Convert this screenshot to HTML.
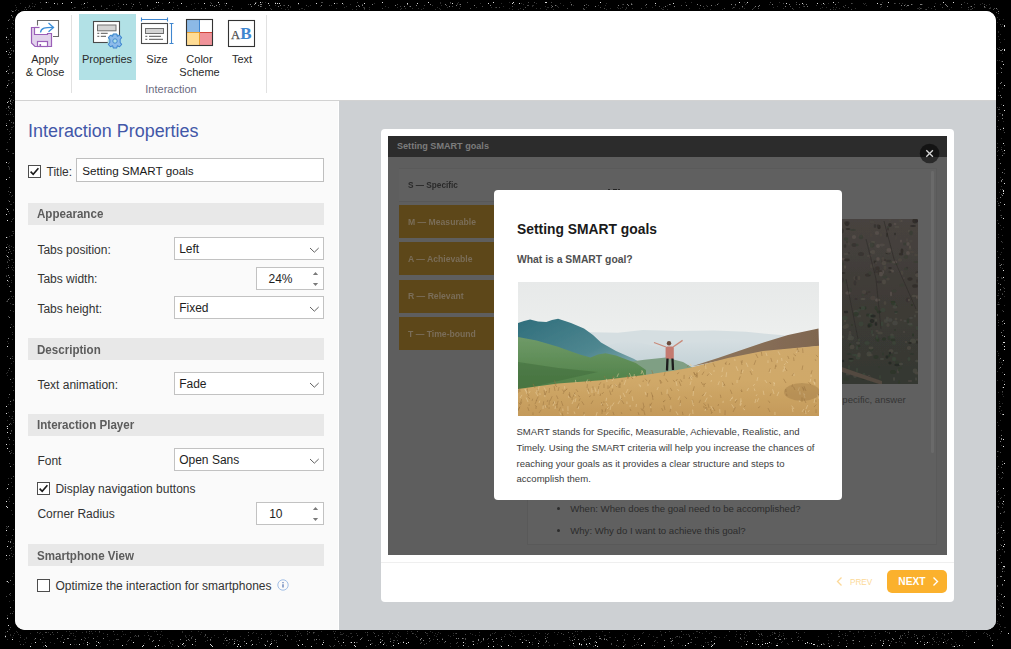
<!DOCTYPE html>
<html><head><meta charset="utf-8">
<style>
*{margin:0;padding:0;box-sizing:border-box}
html,body{width:1011px;height:649px;overflow:hidden;background:#000;font-family:"Liberation Sans",sans-serif}
.abs{position:absolute}
.t{position:absolute;white-space:nowrap}
#win{position:absolute;left:15px;top:11px;width:981px;height:619px;border-radius:10px;background:#fff;overflow:hidden}
#ribbon{position:absolute;left:0;top:0;width:981px;height:90px;background:#fff;border-bottom:1px solid #d2d2d2}
.rl{position:absolute;font-size:11px;color:#2a2a2a;text-align:center;line-height:13px;white-space:nowrap}
.sep{position:absolute;width:1px;background:#e1e1e1}
#left{position:absolute;left:0;top:90px;width:324px;height:529px;background:#fafafa;border-right:1px solid #fff}
#right{position:absolute;left:324px;top:90px;width:657px;height:529px;background:#cdd0d3}
.bar{position:absolute;left:13px;width:296px;height:22px;background:#e8e8e8}
.box{position:absolute;background:#fff;border:1px solid #c4c4c4}
.chk{position:absolute;width:13px;height:13px;border:1px solid #555;background:#fff}
</style></head><body>
<svg class="abs" style="left:0;top:0" width="1011" height="649" viewBox="0 0 1011 649"><path fill="#4a4a4a" d="M40 2h1v1h-1zM87 2h1v1h-1zM139 2h1v1h-1zM255 2h1v1h-1zM262 2h1v1h-1zM321 2h1v1h-1zM322 2h1v1h-1zM357 2h1v1h-1zM450 2h1v1h-1zM467 2h1v1h-1zM528 2h1v1h-1zM534 2h1v1h-1zM551 2h1v1h-1zM770 2h1v1h-1zM796 2h1v1h-1zM838 2h1v1h-1zM57 3h1v1h-1zM211 3h1v1h-1zM631 3h1v1h-1zM783 3h1v1h-1zM851 3h1v1h-1zM894 3h1v1h-1zM899 3h1v1h-1zM967 3h1v1h-1zM57 4h1v1h-1zM140 4h1v1h-1zM248 4h1v1h-1zM362 4h1v1h-1zM397 4h1v1h-1zM586 4h1v1h-1zM623 4h1v1h-1zM670 4h1v1h-1zM796 4h1v1h-1zM803 4h1v1h-1zM824 4h1v1h-1zM974 4h1v1h-1zM984 4h1v1h-1zM177 5h1v1h-1zM225 5h1v1h-1zM284 5h1v1h-1zM306 5h1v1h-1zM329 5h1v1h-1zM424 5h1v1h-1zM446 5h1v1h-1zM527 5h1v1h-1zM528 5h1v1h-1zM551 5h1v1h-1zM588 5h1v1h-1zM645 5h1v1h-1zM655 5h1v1h-1zM681 5h1v1h-1zM845 5h1v1h-1zM29 6h1v1h-1zM34 6h1v1h-1zM101 6h1v1h-1zM132 6h1v1h-1zM186 6h1v1h-1zM232 6h1v1h-1zM261 6h1v1h-1zM400 6h1v1h-1zM452 6h1v1h-1zM460 6h1v1h-1zM482 6h1v1h-1zM512 6h1v1h-1zM659 6h1v1h-1zM703 6h1v1h-1zM707 6h1v1h-1zM790 6h1v1h-1zM804 6h1v1h-1zM843 6h1v1h-1zM25 7h1v1h-1zM74 7h1v1h-1zM496 7h1v1h-1zM499 7h1v1h-1zM525 7h1v1h-1zM551 7h1v1h-1zM600 7h1v1h-1zM733 7h1v1h-1zM848 7h1v1h-1zM942 7h1v1h-1zM968 7h1v1h-1zM984 7h1v1h-1zM72 8h1v1h-1zM106 8h1v1h-1zM153 8h1v1h-1zM201 8h1v1h-1zM205 8h1v1h-1zM265 8h1v1h-1zM364 8h1v1h-1zM382 8h1v1h-1zM470 8h1v1h-1zM567 8h1v1h-1zM583 8h1v1h-1zM604 8h1v1h-1zM641 8h1v1h-1zM724 8h1v1h-1zM758 8h1v1h-1zM792 8h1v1h-1zM920 8h1v1h-1zM972 8h1v1h-1zM989 8h1v1h-1zM994 8h1v1h-1zM26 9h1v1h-1zM95 9h1v1h-1zM150 9h1v1h-1zM163 9h1v1h-1zM172 9h1v1h-1zM231 9h1v1h-1zM271 9h1v1h-1zM523 9h1v1h-1zM584 9h1v1h-1zM752 9h1v1h-1zM830 9h1v1h-1zM851 9h1v1h-1zM926 9h1v1h-1zM993 9h1v1h-1zM15 10h1v1h-1zM13 11h1v1h-1zM996 12h1v1h-1zM998 13h1v1h-1zM12 17h1v1h-1zM9 19h1v1h-1zM12 23h1v1h-1zM1000 24h1v1h-1zM7 28h1v1h-1zM8 39h1v1h-1zM7 42h1v1h-1zM998 49h1v1h-1zM11 50h1v1h-1zM13 50h1v1h-1zM13 51h1v1h-1zM9 57h1v1h-1zM7 70h1v1h-1zM12 72h1v1h-1zM13 72h1v1h-1zM12 73h1v1h-1zM8 80h1v1h-1zM12 82h1v1h-1zM6 87h1v1h-1zM11 95h1v1h-1zM13 100h1v1h-1zM11 104h1v1h-1zM9 108h1v1h-1zM998 109h1v1h-1zM999 109h1v1h-1zM6 114h1v1h-1zM998 120h1v1h-1zM11 122h1v1h-1zM13 122h1v1h-1zM6 123h1v1h-1zM13 123h1v1h-1zM7 129h1v1h-1zM1004 132h1v1h-1zM10 133h1v1h-1zM9 139h1v1h-1zM997 147h1v1h-1zM6 149h1v1h-1zM1001 149h1v1h-1zM8 151h1v1h-1zM13 153h1v1h-1zM1004 153h1v1h-1zM999 159h1v1h-1zM8 163h1v1h-1zM8 166h1v1h-1zM1004 169h1v1h-1zM1004 173h1v1h-1zM9 187h1v1h-1zM1002 189h1v1h-1zM8 191h1v1h-1zM1001 194h1v1h-1zM998 203h1v1h-1zM999 205h1v1h-1zM6 208h1v1h-1zM1001 215h1v1h-1zM1001 217h1v1h-1zM11 221h1v1h-1zM998 223h1v1h-1zM1001 241h1v1h-1zM1003 248h1v1h-1zM11 253h1v1h-1zM6 255h1v1h-1zM8 257h1v1h-1zM998 257h1v1h-1zM1003 259h1v1h-1zM9 260h1v1h-1zM7 262h1v1h-1zM6 276h1v1h-1zM8 281h1v1h-1zM998 283h1v1h-1zM1004 288h1v1h-1zM1004 291h1v1h-1zM1002 294h1v1h-1zM7 301h1v1h-1zM13 304h1v1h-1zM998 304h1v1h-1zM10 310h1v1h-1zM1003 311h1v1h-1zM997 314h1v1h-1zM997 315h1v1h-1zM8 316h1v1h-1zM1003 320h1v1h-1zM998 322h1v1h-1zM1003 330h1v1h-1zM1002 344h1v1h-1zM7 356h1v1h-1zM1002 364h1v1h-1zM999 368h1v1h-1zM13 390h1v1h-1zM1002 391h1v1h-1zM13 400h1v1h-1zM1000 406h1v1h-1zM13 411h1v1h-1zM9 416h1v1h-1zM10 423h1v1h-1zM11 430h1v1h-1zM8 437h1v1h-1zM997 451h1v1h-1zM1000 452h1v1h-1zM10 453h1v1h-1zM1002 461h1v1h-1zM9 463h1v1h-1zM998 466h1v1h-1zM1001 467h1v1h-1zM13 476h1v1h-1zM11 478h1v1h-1zM1001 478h1v1h-1zM997 491h1v1h-1zM12 494h1v1h-1zM1004 495h1v1h-1zM1000 498h1v1h-1zM13 503h1v1h-1zM1003 504h1v1h-1zM998 507h1v1h-1zM1002 507h1v1h-1zM1004 511h1v1h-1zM1001 525h1v1h-1zM6 526h1v1h-1zM1001 527h1v1h-1zM13 529h1v1h-1zM1004 530h1v1h-1zM12 535h1v1h-1zM999 549h1v1h-1zM997 550h1v1h-1zM1004 551h1v1h-1zM12 556h1v1h-1zM999 558h1v1h-1zM6 559h1v1h-1zM1004 567h1v1h-1zM1002 568h1v1h-1zM6 581h1v1h-1zM997 585h1v1h-1zM1002 585h1v1h-1zM997 586h1v1h-1zM10 593h1v1h-1zM9 594h1v1h-1zM6 596h1v1h-1zM997 599h1v1h-1zM1001 606h1v1h-1zM10 613h1v1h-1zM12 613h1v1h-1zM1003 616h1v1h-1zM10 627h1v1h-1zM9 629h1v1h-1zM89 631h1v1h-1zM99 631h1v1h-1zM113 631h1v1h-1zM307 631h1v1h-1zM417 631h1v1h-1zM681 631h1v1h-1zM729 631h1v1h-1zM839 631h1v1h-1zM885 631h1v1h-1zM895 631h1v1h-1zM37 632h1v1h-1zM45 632h1v1h-1zM46 632h1v1h-1zM52 632h1v1h-1zM57 632h1v1h-1zM248 632h1v1h-1zM309 632h1v1h-1zM313 632h1v1h-1zM367 632h1v1h-1zM425 632h1v1h-1zM568 632h1v1h-1zM665 632h1v1h-1zM699 632h1v1h-1zM745 632h1v1h-1zM796 632h1v1h-1zM874 632h1v1h-1zM908 632h1v1h-1zM334 633h1v1h-1zM374 633h1v1h-1zM412 633h1v1h-1zM456 633h1v1h-1zM561 633h1v1h-1zM572 633h1v1h-1zM774 633h1v1h-1zM889 633h1v1h-1zM904 633h1v1h-1zM948 633h1v1h-1zM50 634h1v1h-1zM107 634h1v1h-1zM157 634h1v1h-1zM205 634h1v1h-1zM465 634h1v1h-1zM547 634h1v1h-1zM563 634h1v1h-1zM740 634h1v1h-1zM759 634h1v1h-1zM761 634h1v1h-1zM914 634h1v1h-1zM929 634h1v1h-1zM944 634h1v1h-1zM987 634h1v1h-1zM62 635h1v1h-1zM135 635h1v1h-1zM138 635h1v1h-1zM148 635h1v1h-1zM205 635h1v1h-1zM248 635h1v1h-1zM282 635h1v1h-1zM287 635h1v1h-1zM357 635h1v1h-1zM378 635h1v1h-1zM490 635h1v1h-1zM510 635h1v1h-1zM845 635h1v1h-1zM902 635h1v1h-1zM916 635h1v1h-1zM989 635h1v1h-1zM138 636h1v1h-1zM287 636h1v1h-1zM375 636h1v1h-1zM382 636h1v1h-1zM416 636h1v1h-1zM504 636h1v1h-1zM515 636h1v1h-1zM599 636h1v1h-1zM677 636h1v1h-1zM689 636h1v1h-1zM714 636h1v1h-1zM715 636h1v1h-1zM778 636h1v1h-1zM838 636h1v1h-1zM839 636h1v1h-1zM900 636h1v1h-1zM922 636h1v1h-1zM924 636h1v1h-1zM968 636h1v1h-1zM20 637h1v1h-1zM130 637h1v1h-1zM191 637h1v1h-1zM207 637h1v1h-1zM547 637h1v1h-1zM569 637h1v1h-1zM681 637h1v1h-1zM695 637h1v1h-1zM800 637h1v1h-1zM907 637h1v1h-1zM85 638h1v1h-1zM191 638h1v1h-1zM406 638h1v1h-1zM463 638h1v1h-1zM465 638h1v1h-1zM488 638h1v1h-1zM604 638h1v1h-1zM705 638h1v1h-1zM791 638h1v1h-1zM901 638h1v1h-1zM932 638h1v1h-1zM990 638h1v1h-1zM64 639h1v1h-1zM116 639h1v1h-1zM118 639h1v1h-1zM149 639h1v1h-1zM232 639h1v1h-1zM314 639h1v1h-1zM319 639h1v1h-1zM335 639h1v1h-1zM343 639h1v1h-1zM465 639h1v1h-1zM583 639h1v1h-1zM586 639h1v1h-1zM624 639h1v1h-1zM638 639h1v1h-1zM691 639h1v1h-1zM714 639h1v1h-1zM933 639h1v1h-1zM128 640h1v1h-1zM189 640h1v1h-1zM207 640h1v1h-1zM210 640h1v1h-1zM227 640h1v1h-1zM237 640h1v1h-1zM274 640h1v1h-1zM323 640h1v1h-1zM370 640h1v1h-1zM393 640h1v1h-1zM394 640h1v1h-1zM397 640h1v1h-1zM546 640h1v1h-1zM584 640h1v1h-1zM624 640h1v1h-1zM846 640h1v1h-1zM852 640h1v1h-1zM271 641h1v1h-1zM429 641h1v1h-1zM472 641h1v1h-1zM481 641h1v1h-1zM539 641h1v1h-1zM654 641h1v1h-1zM891 641h1v1h-1zM934 641h1v1h-1zM45 642h1v1h-1zM276 642h1v1h-1zM350 642h1v1h-1zM356 642h1v1h-1zM393 642h1v1h-1zM421 642h1v1h-1zM444 642h1v1h-1zM457 642h1v1h-1zM545 642h1v1h-1zM690 642h1v1h-1zM691 642h1v1h-1zM781 642h1v1h-1zM839 642h1v1h-1zM896 642h1v1h-1zM904 642h1v1h-1zM924 642h1v1h-1zM89 643h1v1h-1zM99 643h1v1h-1zM223 643h1v1h-1zM384 643h1v1h-1zM420 643h1v1h-1zM426 643h1v1h-1zM456 643h1v1h-1zM586 643h1v1h-1zM611 643h1v1h-1zM809 643h1v1h-1zM823 643h1v1h-1zM828 643h1v1h-1zM853 643h1v1h-1zM20 644h1v1h-1zM23 644h1v1h-1zM107 644h1v1h-1zM126 644h1v1h-1zM256 644h1v1h-1zM264 644h1v1h-1zM297 644h1v1h-1zM424 644h1v1h-1zM532 644h1v1h-1zM611 644h1v1h-1zM708 644h1v1h-1zM711 644h1v1h-1zM713 644h1v1h-1zM755 644h1v1h-1zM824 644h1v1h-1zM932 644h1v1h-1zM938 644h1v1h-1zM185 645h1v1h-1zM251 645h1v1h-1zM334 645h1v1h-1zM341 645h1v1h-1zM554 645h1v1h-1zM581 645h1v1h-1zM616 645h1v1h-1zM634 645h1v1h-1zM673 645h1v1h-1zM817 645h1v1h-1zM831 645h1v1h-1zM838 645h1v1h-1zM43 646h1v1h-1zM171 646h1v1h-1zM184 646h1v1h-1zM269 646h1v1h-1zM330 646h1v1h-1zM366 646h1v1h-1zM468 646h1v1h-1zM511 646h1v1h-1zM527 646h1v1h-1zM538 646h1v1h-1zM587 646h1v1h-1zM593 646h1v1h-1zM741 646h1v1h-1zM760 646h1v1h-1zM768 646h1v1h-1zM817 646h1v1h-1zM864 646h1v1h-1zM953 646h1v1h-1zM957 646h1v1h-1z"/><path fill="#2e2e2e" d="M45 2h1v1h-1zM48 2h1v1h-1zM173 2h1v1h-1zM210 2h1v1h-1zM256 2h1v1h-1zM265 2h1v1h-1zM275 2h1v1h-1zM440 2h1v1h-1zM458 2h1v1h-1zM509 2h1v1h-1zM570 2h1v1h-1zM685 2h1v1h-1zM691 2h1v1h-1zM744 2h1v1h-1zM779 2h1v1h-1zM882 2h1v1h-1zM964 2h1v1h-1zM20 3h1v1h-1zM32 3h1v1h-1zM118 3h1v1h-1zM131 3h1v1h-1zM162 3h1v1h-1zM168 3h1v1h-1zM194 3h1v1h-1zM198 3h1v1h-1zM224 3h1v1h-1zM336 3h1v1h-1zM337 3h1v1h-1zM374 3h1v1h-1zM440 3h1v1h-1zM450 3h1v1h-1zM457 3h1v1h-1zM480 3h1v1h-1zM501 3h1v1h-1zM521 3h1v1h-1zM536 3h1v1h-1zM560 3h1v1h-1zM606 3h1v1h-1zM718 3h1v1h-1zM746 3h1v1h-1zM828 3h1v1h-1zM852 3h1v1h-1zM863 3h1v1h-1zM865 3h1v1h-1zM895 3h1v1h-1zM902 3h1v1h-1zM935 3h1v1h-1zM982 3h1v1h-1zM35 4h1v1h-1zM81 4h1v1h-1zM83 4h1v1h-1zM114 4h1v1h-1zM191 4h1v1h-1zM298 4h1v1h-1zM343 4h1v1h-1zM350 4h1v1h-1zM457 4h1v1h-1zM459 4h1v1h-1zM514 4h1v1h-1zM523 4h1v1h-1zM622 4h1v1h-1zM632 4h1v1h-1zM745 4h1v1h-1zM769 4h1v1h-1zM821 4h1v1h-1zM864 4h1v1h-1zM905 4h1v1h-1zM912 4h1v1h-1zM922 4h1v1h-1zM940 4h1v1h-1zM980 4h1v1h-1zM989 4h1v1h-1zM15 5h1v1h-1zM29 5h1v1h-1zM101 5h1v1h-1zM109 5h1v1h-1zM112 5h1v1h-1zM158 5h1v1h-1zM275 5h1v1h-1zM283 5h1v1h-1zM310 5h1v1h-1zM331 5h1v1h-1zM432 5h1v1h-1zM441 5h1v1h-1zM532 5h1v1h-1zM533 5h1v1h-1zM556 5h1v1h-1zM563 5h1v1h-1zM571 5h1v1h-1zM573 5h1v1h-1zM598 5h1v1h-1zM605 5h1v1h-1zM667 5h1v1h-1zM706 5h1v1h-1zM715 5h1v1h-1zM735 5h1v1h-1zM816 5h1v1h-1zM866 5h1v1h-1zM986 5h1v1h-1zM32 6h1v1h-1zM118 6h1v1h-1zM147 6h1v1h-1zM219 6h1v1h-1zM290 6h1v1h-1zM308 6h1v1h-1zM320 6h1v1h-1zM346 6h1v1h-1zM385 6h1v1h-1zM409 6h1v1h-1zM503 6h1v1h-1zM532 6h1v1h-1zM545 6h1v1h-1zM557 6h1v1h-1zM777 6h1v1h-1zM803 6h1v1h-1zM881 6h1v1h-1zM906 6h1v1h-1zM970 6h1v1h-1zM16 7h1v1h-1zM28 7h1v1h-1zM50 7h1v1h-1zM75 7h1v1h-1zM84 7h1v1h-1zM87 7h1v1h-1zM155 7h1v1h-1zM173 7h1v1h-1zM287 7h1v1h-1zM290 7h1v1h-1zM344 7h1v1h-1zM363 7h1v1h-1zM364 7h1v1h-1zM369 7h1v1h-1zM388 7h1v1h-1zM397 7h1v1h-1zM437 7h1v1h-1zM447 7h1v1h-1zM476 7h1v1h-1zM491 7h1v1h-1zM495 7h1v1h-1zM547 7h1v1h-1zM548 7h1v1h-1zM558 7h1v1h-1zM586 7h1v1h-1zM617 7h1v1h-1zM622 7h1v1h-1zM626 7h1v1h-1zM646 7h1v1h-1zM652 7h1v1h-1zM663 7h1v1h-1zM734 7h1v1h-1zM742 7h1v1h-1zM754 7h1v1h-1zM773 7h1v1h-1zM799 7h1v1h-1zM822 7h1v1h-1zM826 7h1v1h-1zM833 7h1v1h-1zM836 7h1v1h-1zM844 7h1v1h-1zM880 7h1v1h-1zM919 7h1v1h-1zM928 7h1v1h-1zM951 7h1v1h-1zM961 7h1v1h-1zM974 7h1v1h-1zM985 7h1v1h-1zM990 7h1v1h-1zM30 8h1v1h-1zM41 8h1v1h-1zM82 8h1v1h-1zM107 8h1v1h-1zM120 8h1v1h-1zM131 8h1v1h-1zM141 8h1v1h-1zM178 8h1v1h-1zM195 8h1v1h-1zM228 8h1v1h-1zM241 8h1v1h-1zM270 8h1v1h-1zM281 8h1v1h-1zM301 8h1v1h-1zM302 8h1v1h-1zM336 8h1v1h-1zM401 8h1v1h-1zM405 8h1v1h-1zM412 8h1v1h-1zM418 8h1v1h-1zM423 8h1v1h-1zM439 8h1v1h-1zM459 8h1v1h-1zM509 8h1v1h-1zM520 8h1v1h-1zM536 8h1v1h-1zM540 8h1v1h-1zM610 8h1v1h-1zM618 8h1v1h-1zM620 8h1v1h-1zM626 8h1v1h-1zM632 8h1v1h-1zM661 8h1v1h-1zM689 8h1v1h-1zM699 8h1v1h-1zM704 8h1v1h-1zM732 8h1v1h-1zM739 8h1v1h-1zM744 8h1v1h-1zM753 8h1v1h-1zM783 8h1v1h-1zM820 8h1v1h-1zM839 8h1v1h-1zM855 8h1v1h-1zM917 8h1v1h-1zM918 8h1v1h-1zM921 8h1v1h-1zM931 8h1v1h-1zM990 8h1v1h-1zM16 9h1v1h-1zM24 9h1v1h-1zM104 9h1v1h-1zM116 9h1v1h-1zM193 9h1v1h-1zM221 9h1v1h-1zM285 9h1v1h-1zM288 9h1v1h-1zM299 9h1v1h-1zM304 9h1v1h-1zM352 9h1v1h-1zM356 9h1v1h-1zM364 9h1v1h-1zM369 9h1v1h-1zM400 9h1v1h-1zM421 9h1v1h-1zM435 9h1v1h-1zM440 9h1v1h-1zM512 9h1v1h-1zM518 9h1v1h-1zM546 9h1v1h-1zM553 9h1v1h-1zM583 9h1v1h-1zM606 9h1v1h-1zM625 9h1v1h-1zM662 9h1v1h-1zM663 9h1v1h-1zM667 9h1v1h-1zM710 9h1v1h-1zM722 9h1v1h-1zM793 9h1v1h-1zM833 9h1v1h-1zM835 9h1v1h-1zM901 9h1v1h-1zM919 9h1v1h-1zM925 9h1v1h-1zM935 9h1v1h-1zM949 9h1v1h-1zM968 9h1v1h-1zM970 9h1v1h-1zM971 9h1v1h-1zM997 9h1v1h-1zM11 10h1v1h-1zM18 10h1v1h-1zM12 16h1v1h-1zM997 17h1v1h-1zM999 19h1v1h-1zM1003 19h1v1h-1zM13 20h1v1h-1zM997 22h1v1h-1zM13 24h1v1h-1zM1002 24h1v1h-1zM1001 26h1v1h-1zM11 27h1v1h-1zM13 28h1v1h-1zM998 31h1v1h-1zM998 32h1v1h-1zM1000 34h1v1h-1zM6 36h1v1h-1zM998 36h1v1h-1zM11 37h1v1h-1zM6 39h1v1h-1zM999 39h1v1h-1zM1004 39h1v1h-1zM11 42h1v1h-1zM1000 42h1v1h-1zM13 45h1v1h-1zM999 47h1v1h-1zM997 48h1v1h-1zM999 49h1v1h-1zM8 50h1v1h-1zM11 53h1v1h-1zM1002 53h1v1h-1zM997 60h1v1h-1zM999 60h1v1h-1zM1001 61h1v1h-1zM10 64h1v1h-1zM1000 67h1v1h-1zM9 69h1v1h-1zM997 73h1v1h-1zM13 79h1v1h-1zM9 80h1v1h-1zM8 83h1v1h-1zM11 83h1v1h-1zM8 84h1v1h-1zM998 87h1v1h-1zM998 88h1v1h-1zM1002 88h1v1h-1zM999 91h1v1h-1zM13 92h1v1h-1zM998 95h1v1h-1zM11 99h1v1h-1zM12 102h1v1h-1zM1001 104h1v1h-1zM9 106h1v1h-1zM997 107h1v1h-1zM999 107h1v1h-1zM6 108h1v1h-1zM11 108h1v1h-1zM13 109h1v1h-1zM8 110h1v1h-1zM999 113h1v1h-1zM1000 113h1v1h-1zM8 114h1v1h-1zM10 114h1v1h-1zM12 114h1v1h-1zM13 116h1v1h-1zM997 116h1v1h-1zM1003 121h1v1h-1zM13 126h1v1h-1zM997 126h1v1h-1zM11 127h1v1h-1zM12 127h1v1h-1zM1003 127h1v1h-1zM11 129h1v1h-1zM998 129h1v1h-1zM1003 130h1v1h-1zM9 131h1v1h-1zM9 134h1v1h-1zM1001 138h1v1h-1zM7 142h1v1h-1zM997 143h1v1h-1zM1004 145h1v1h-1zM1001 147h1v1h-1zM7 149h1v1h-1zM998 150h1v1h-1zM997 151h1v1h-1zM1002 151h1v1h-1zM12 153h1v1h-1zM1003 153h1v1h-1zM997 155h1v1h-1zM9 162h1v1h-1zM9 167h1v1h-1zM9 168h1v1h-1zM998 168h1v1h-1zM9 169h1v1h-1zM11 171h1v1h-1zM1000 177h1v1h-1zM998 182h1v1h-1zM1001 186h1v1h-1zM1000 189h1v1h-1zM999 192h1v1h-1zM9 194h1v1h-1zM12 195h1v1h-1zM11 196h1v1h-1zM997 198h1v1h-1zM8 200h1v1h-1zM997 201h1v1h-1zM13 202h1v1h-1zM10 204h1v1h-1zM11 204h1v1h-1zM998 205h1v1h-1zM13 209h1v1h-1zM13 210h1v1h-1zM1000 210h1v1h-1zM9 213h1v1h-1zM1000 215h1v1h-1zM13 218h1v1h-1zM12 219h1v1h-1zM997 220h1v1h-1zM1000 225h1v1h-1zM1003 227h1v1h-1zM1001 229h1v1h-1zM12 231h1v1h-1zM13 231h1v1h-1zM13 233h1v1h-1zM998 234h1v1h-1zM11 235h1v1h-1zM12 235h1v1h-1zM1002 235h1v1h-1zM9 236h1v1h-1zM7 237h1v1h-1zM998 237h1v1h-1zM1002 242h1v1h-1zM7 244h1v1h-1zM9 245h1v1h-1zM8 246h1v1h-1zM11 246h1v1h-1zM9 247h1v1h-1zM13 247h1v1h-1zM6 250h1v1h-1zM13 250h1v1h-1zM10 251h1v1h-1zM997 251h1v1h-1zM1001 252h1v1h-1zM1000 254h1v1h-1zM8 259h1v1h-1zM11 259h1v1h-1zM12 259h1v1h-1zM7 261h1v1h-1zM13 262h1v1h-1zM999 263h1v1h-1zM1003 264h1v1h-1zM8 265h1v1h-1zM12 265h1v1h-1zM999 265h1v1h-1zM11 267h1v1h-1zM13 267h1v1h-1zM1000 267h1v1h-1zM6 268h1v1h-1zM1002 268h1v1h-1zM12 269h1v1h-1zM13 270h1v1h-1zM6 275h1v1h-1zM13 275h1v1h-1zM997 277h1v1h-1zM998 277h1v1h-1zM1001 277h1v1h-1zM1001 278h1v1h-1zM1002 278h1v1h-1zM11 280h1v1h-1zM997 280h1v1h-1zM1004 280h1v1h-1zM11 282h1v1h-1zM7 284h1v1h-1zM1003 287h1v1h-1zM998 290h1v1h-1zM1000 290h1v1h-1zM11 291h1v1h-1zM998 293h1v1h-1zM1002 293h1v1h-1zM997 295h1v1h-1zM998 295h1v1h-1zM11 296h1v1h-1zM13 296h1v1h-1zM1004 296h1v1h-1zM9 298h1v1h-1zM12 298h1v1h-1zM999 299h1v1h-1zM7 300h1v1h-1zM6 301h1v1h-1zM998 302h1v1h-1zM10 303h1v1h-1zM12 304h1v1h-1zM997 304h1v1h-1zM999 304h1v1h-1zM1004 305h1v1h-1zM1002 310h1v1h-1zM13 311h1v1h-1zM998 320h1v1h-1zM11 324h1v1h-1zM1002 324h1v1h-1zM998 325h1v1h-1zM13 326h1v1h-1zM12 332h1v1h-1zM12 334h1v1h-1zM12 339h1v1h-1zM7 341h1v1h-1zM8 343h1v1h-1zM997 351h1v1h-1zM998 353h1v1h-1zM998 355h1v1h-1zM12 356h1v1h-1zM12 358h1v1h-1zM999 359h1v1h-1zM13 361h1v1h-1zM999 362h1v1h-1zM1001 362h1v1h-1zM11 363h1v1h-1zM8 370h1v1h-1zM11 371h1v1h-1zM997 371h1v1h-1zM7 372h1v1h-1zM1002 372h1v1h-1zM6 373h1v1h-1zM7 375h1v1h-1zM13 378h1v1h-1zM997 380h1v1h-1zM1002 380h1v1h-1zM1004 381h1v1h-1zM12 382h1v1h-1zM12 386h1v1h-1zM1002 387h1v1h-1zM998 392h1v1h-1zM1002 392h1v1h-1zM1002 394h1v1h-1zM1003 396h1v1h-1zM8 397h1v1h-1zM13 399h1v1h-1zM999 401h1v1h-1zM999 403h1v1h-1zM1002 403h1v1h-1zM8 404h1v1h-1zM10 404h1v1h-1zM999 406h1v1h-1zM999 408h1v1h-1zM1001 410h1v1h-1zM999 411h1v1h-1zM8 412h1v1h-1zM1000 413h1v1h-1zM12 416h1v1h-1zM11 418h1v1h-1zM12 418h1v1h-1zM7 420h1v1h-1zM13 420h1v1h-1zM1000 420h1v1h-1zM13 422h1v1h-1zM997 422h1v1h-1zM11 424h1v1h-1zM998 425h1v1h-1zM6 426h1v1h-1zM1001 430h1v1h-1zM11 431h1v1h-1zM999 437h1v1h-1zM13 440h1v1h-1zM9 444h1v1h-1zM13 444h1v1h-1zM1001 445h1v1h-1zM11 450h1v1h-1zM998 451h1v1h-1zM11 452h1v1h-1zM13 453h1v1h-1zM997 456h1v1h-1zM13 464h1v1h-1zM997 468h1v1h-1zM1003 473h1v1h-1zM998 474h1v1h-1zM999 477h1v1h-1zM1002 477h1v1h-1zM8 478h1v1h-1zM11 482h1v1h-1zM998 484h1v1h-1zM12 486h1v1h-1zM6 489h1v1h-1zM998 490h1v1h-1zM998 494h1v1h-1zM9 497h1v1h-1zM1001 497h1v1h-1zM8 499h1v1h-1zM9 501h1v1h-1zM998 501h1v1h-1zM999 503h1v1h-1zM997 506h1v1h-1zM998 506h1v1h-1zM11 510h1v1h-1zM1003 512h1v1h-1zM1004 512h1v1h-1zM12 514h1v1h-1zM1003 522h1v1h-1zM7 527h1v1h-1zM1000 527h1v1h-1zM6 528h1v1h-1zM998 528h1v1h-1zM998 529h1v1h-1zM998 532h1v1h-1zM1004 532h1v1h-1zM997 533h1v1h-1zM1002 533h1v1h-1zM6 535h1v1h-1zM11 539h1v1h-1zM1003 540h1v1h-1zM13 543h1v1h-1zM1000 544h1v1h-1zM13 546h1v1h-1zM11 547h1v1h-1zM1002 549h1v1h-1zM11 550h1v1h-1zM1004 552h1v1h-1zM11 553h1v1h-1zM13 554h1v1h-1zM1000 555h1v1h-1zM9 558h1v1h-1zM998 564h1v1h-1zM1003 568h1v1h-1zM1002 569h1v1h-1zM1004 571h1v1h-1zM13 573h1v1h-1zM12 576h1v1h-1zM997 577h1v1h-1zM13 584h1v1h-1zM999 593h1v1h-1zM10 595h1v1h-1zM997 596h1v1h-1zM1003 597h1v1h-1zM13 600h1v1h-1zM998 600h1v1h-1zM9 601h1v1h-1zM1000 605h1v1h-1zM998 608h1v1h-1zM998 609h1v1h-1zM13 611h1v1h-1zM999 613h1v1h-1zM997 614h1v1h-1zM7 615h1v1h-1zM7 617h1v1h-1zM997 621h1v1h-1zM997 623h1v1h-1zM999 624h1v1h-1zM1000 626h1v1h-1zM1004 627h1v1h-1zM1005 627h1v1h-1zM999 629h1v1h-1zM16 631h1v1h-1zM66 631h1v1h-1zM69 631h1v1h-1zM76 631h1v1h-1zM86 631h1v1h-1zM91 631h1v1h-1zM95 631h1v1h-1zM122 631h1v1h-1zM154 631h1v1h-1zM156 631h1v1h-1zM161 631h1v1h-1zM182 631h1v1h-1zM191 631h1v1h-1zM198 631h1v1h-1zM227 631h1v1h-1zM270 631h1v1h-1zM296 631h1v1h-1zM298 631h1v1h-1zM321 631h1v1h-1zM333 631h1v1h-1zM335 631h1v1h-1zM389 631h1v1h-1zM407 631h1v1h-1zM411 631h1v1h-1zM430 631h1v1h-1zM511 631h1v1h-1zM575 631h1v1h-1zM577 631h1v1h-1zM581 631h1v1h-1zM602 631h1v1h-1zM660 631h1v1h-1zM669 631h1v1h-1zM696 631h1v1h-1zM697 631h1v1h-1zM706 631h1v1h-1zM736 631h1v1h-1zM749 631h1v1h-1zM756 631h1v1h-1zM849 631h1v1h-1zM850 631h1v1h-1zM858 631h1v1h-1zM863 631h1v1h-1zM908 631h1v1h-1zM962 631h1v1h-1zM966 631h1v1h-1zM5 632h1v1h-1zM17 632h1v1h-1zM40 632h1v1h-1zM48 632h1v1h-1zM82 632h1v1h-1zM86 632h1v1h-1zM99 632h1v1h-1zM130 632h1v1h-1zM147 632h1v1h-1zM182 632h1v1h-1zM201 632h1v1h-1zM253 632h1v1h-1zM285 632h1v1h-1zM314 632h1v1h-1zM340 632h1v1h-1zM365 632h1v1h-1zM373 632h1v1h-1zM398 632h1v1h-1zM432 632h1v1h-1zM438 632h1v1h-1zM479 632h1v1h-1zM495 632h1v1h-1zM536 632h1v1h-1zM554 632h1v1h-1zM558 632h1v1h-1zM609 632h1v1h-1zM643 632h1v1h-1zM711 632h1v1h-1zM772 632h1v1h-1zM774 632h1v1h-1zM779 632h1v1h-1zM804 632h1v1h-1zM858 632h1v1h-1zM887 632h1v1h-1zM889 632h1v1h-1zM936 632h1v1h-1zM951 632h1v1h-1zM976 632h1v1h-1zM984 632h1v1h-1zM14 633h1v1h-1zM30 633h1v1h-1zM39 633h1v1h-1zM70 633h1v1h-1zM71 633h1v1h-1zM73 633h1v1h-1zM89 633h1v1h-1zM92 633h1v1h-1zM103 633h1v1h-1zM252 633h1v1h-1zM256 633h1v1h-1zM271 633h1v1h-1zM300 633h1v1h-1zM307 633h1v1h-1zM313 633h1v1h-1zM343 633h1v1h-1zM350 633h1v1h-1zM351 633h1v1h-1zM356 633h1v1h-1zM382 633h1v1h-1zM388 633h1v1h-1zM392 633h1v1h-1zM407 633h1v1h-1zM413 633h1v1h-1zM426 633h1v1h-1zM427 633h1v1h-1zM435 633h1v1h-1zM440 633h1v1h-1zM453 633h1v1h-1zM455 633h1v1h-1zM470 633h1v1h-1zM492 633h1v1h-1zM494 633h1v1h-1zM513 633h1v1h-1zM521 633h1v1h-1zM539 633h1v1h-1zM545 633h1v1h-1zM548 633h1v1h-1zM596 633h1v1h-1zM625 633h1v1h-1zM642 633h1v1h-1zM693 633h1v1h-1zM702 633h1v1h-1zM709 633h1v1h-1zM758 633h1v1h-1zM761 633h1v1h-1zM775 633h1v1h-1zM783 633h1v1h-1zM798 633h1v1h-1zM831 633h1v1h-1zM845 633h1v1h-1zM853 633h1v1h-1zM879 633h1v1h-1zM942 633h1v1h-1zM966 633h1v1h-1zM983 633h1v1h-1zM986 633h1v1h-1zM993 633h1v1h-1zM1000 633h1v1h-1zM10 634h1v1h-1zM18 634h1v1h-1zM42 634h1v1h-1zM53 634h1v1h-1zM114 634h1v1h-1zM117 634h1v1h-1zM123 634h1v1h-1zM125 634h1v1h-1zM160 634h1v1h-1zM200 634h1v1h-1zM223 634h1v1h-1zM261 634h1v1h-1zM265 634h1v1h-1zM270 634h1v1h-1zM278 634h1v1h-1zM285 634h1v1h-1zM297 634h1v1h-1zM307 634h1v1h-1zM327 634h1v1h-1zM340 634h1v1h-1zM341 634h1v1h-1zM342 634h1v1h-1zM367 634h1v1h-1zM397 634h1v1h-1zM415 634h1v1h-1zM437 634h1v1h-1zM472 634h1v1h-1zM490 634h1v1h-1zM505 634h1v1h-1zM509 634h1v1h-1zM528 634h1v1h-1zM557 634h1v1h-1zM577 634h1v1h-1zM627 634h1v1h-1zM649 634h1v1h-1zM661 634h1v1h-1zM683 634h1v1h-1zM686 634h1v1h-1zM688 634h1v1h-1zM736 634h1v1h-1zM744 634h1v1h-1zM772 634h1v1h-1zM779 634h1v1h-1zM827 634h1v1h-1zM838 634h1v1h-1zM842 634h1v1h-1zM908 634h1v1h-1zM936 634h1v1h-1zM5 635h1v1h-1zM10 635h1v1h-1zM13 635h1v1h-1zM20 635h1v1h-1zM69 635h1v1h-1zM73 635h1v1h-1zM144 635h1v1h-1zM162 635h1v1h-1zM185 635h1v1h-1zM189 635h1v1h-1zM214 635h1v1h-1zM280 635h1v1h-1zM301 635h1v1h-1zM318 635h1v1h-1zM346 635h1v1h-1zM367 635h1v1h-1zM398 635h1v1h-1zM427 635h1v1h-1zM434 635h1v1h-1zM448 635h1v1h-1zM453 635h1v1h-1zM475 635h1v1h-1zM479 635h1v1h-1zM524 635h1v1h-1zM533 635h1v1h-1zM574 635h1v1h-1zM604 635h1v1h-1zM605 635h1v1h-1zM622 635h1v1h-1zM634 635h1v1h-1zM661 635h1v1h-1zM689 635h1v1h-1zM726 635h1v1h-1zM746 635h1v1h-1zM762 635h1v1h-1zM770 635h1v1h-1zM779 635h1v1h-1zM783 635h1v1h-1zM847 635h1v1h-1zM865 635h1v1h-1zM875 635h1v1h-1zM900 635h1v1h-1zM905 635h1v1h-1zM923 635h1v1h-1zM944 635h1v1h-1zM966 635h1v1h-1zM970 635h1v1h-1zM75 636h1v1h-1zM97 636h1v1h-1zM107 636h1v1h-1zM121 636h1v1h-1zM134 636h1v1h-1zM136 636h1v1h-1zM150 636h1v1h-1zM151 636h1v1h-1zM185 636h1v1h-1zM192 636h1v1h-1zM204 636h1v1h-1zM240 636h1v1h-1zM295 636h1v1h-1zM348 636h1v1h-1zM352 636h1v1h-1zM395 636h1v1h-1zM400 636h1v1h-1zM436 636h1v1h-1zM450 636h1v1h-1zM512 636h1v1h-1zM522 636h1v1h-1zM545 636h1v1h-1zM573 636h1v1h-1zM589 636h1v1h-1zM596 636h1v1h-1zM648 636h1v1h-1zM653 636h1v1h-1zM676 636h1v1h-1zM679 636h1v1h-1zM735 636h1v1h-1zM759 636h1v1h-1zM767 636h1v1h-1zM781 636h1v1h-1zM798 636h1v1h-1zM818 636h1v1h-1zM854 636h1v1h-1zM871 636h1v1h-1zM914 636h1v1h-1zM987 636h1v1h-1zM5 637h1v1h-1zM12 637h1v1h-1zM26 637h1v1h-1zM43 637h1v1h-1zM61 637h1v1h-1zM84 637h1v1h-1zM88 637h1v1h-1zM160 637h1v1h-1zM186 637h1v1h-1zM211 637h1v1h-1zM218 637h1v1h-1zM226 637h1v1h-1zM258 637h1v1h-1zM334 637h1v1h-1zM337 637h1v1h-1zM351 637h1v1h-1zM362 637h1v1h-1zM396 637h1v1h-1zM417 637h1v1h-1zM501 637h1v1h-1zM575 637h1v1h-1zM609 637h1v1h-1zM610 637h1v1h-1zM615 637h1v1h-1zM633 637h1v1h-1zM656 637h1v1h-1zM657 637h1v1h-1zM675 637h1v1h-1zM679 637h1v1h-1zM697 637h1v1h-1zM716 637h1v1h-1zM719 637h1v1h-1zM724 637h1v1h-1zM740 637h1v1h-1zM744 637h1v1h-1zM797 637h1v1h-1zM828 637h1v1h-1zM864 637h1v1h-1zM900 637h1v1h-1zM911 637h1v1h-1zM917 637h1v1h-1zM933 637h1v1h-1zM937 637h1v1h-1zM990 637h1v1h-1zM26 638h1v1h-1zM149 638h1v1h-1zM167 638h1v1h-1zM244 638h1v1h-1zM390 638h1v1h-1zM442 638h1v1h-1zM588 638h1v1h-1zM672 638h1v1h-1zM744 638h1v1h-1zM776 638h1v1h-1zM786 638h1v1h-1zM843 638h1v1h-1zM875 638h1v1h-1zM922 638h1v1h-1zM941 638h1v1h-1zM7 639h1v1h-1zM24 639h1v1h-1zM34 639h1v1h-1zM74 639h1v1h-1zM75 639h1v1h-1zM117 639h1v1h-1zM129 639h1v1h-1zM234 639h1v1h-1zM235 639h1v1h-1zM258 639h1v1h-1zM271 639h1v1h-1zM291 639h1v1h-1zM390 639h1v1h-1zM433 639h1v1h-1zM487 639h1v1h-1zM519 639h1v1h-1zM524 639h1v1h-1zM569 639h1v1h-1zM601 639h1v1h-1zM741 639h1v1h-1zM758 639h1v1h-1zM762 639h1v1h-1zM784 639h1v1h-1zM885 639h1v1h-1zM944 639h1v1h-1zM948 639h1v1h-1zM952 639h1v1h-1zM964 639h1v1h-1zM978 639h1v1h-1zM997 639h1v1h-1zM84 640h1v1h-1zM109 640h1v1h-1zM113 640h1v1h-1zM131 640h1v1h-1zM172 640h1v1h-1zM173 640h1v1h-1zM224 640h1v1h-1zM267 640h1v1h-1zM276 640h1v1h-1zM286 640h1v1h-1zM314 640h1v1h-1zM420 640h1v1h-1zM430 640h1v1h-1zM483 640h1v1h-1zM525 640h1v1h-1zM528 640h1v1h-1zM538 640h1v1h-1zM570 640h1v1h-1zM607 640h1v1h-1zM655 640h1v1h-1zM802 640h1v1h-1zM818 640h1v1h-1zM828 640h1v1h-1zM833 640h1v1h-1zM883 640h1v1h-1zM947 640h1v1h-1zM19 641h1v1h-1zM60 641h1v1h-1zM127 641h1v1h-1zM169 641h1v1h-1zM205 641h1v1h-1zM239 641h1v1h-1zM250 641h1v1h-1zM296 641h1v1h-1zM380 641h1v1h-1zM381 641h1v1h-1zM403 641h1v1h-1zM439 641h1v1h-1zM502 641h1v1h-1zM563 641h1v1h-1zM564 641h1v1h-1zM670 641h1v1h-1zM736 641h1v1h-1zM744 641h1v1h-1zM762 641h1v1h-1zM782 641h1v1h-1zM899 641h1v1h-1zM939 641h1v1h-1zM945 641h1v1h-1zM25 642h1v1h-1zM42 642h1v1h-1zM50 642h1v1h-1zM100 642h1v1h-1zM170 642h1v1h-1zM229 642h1v1h-1zM259 642h1v1h-1zM357 642h1v1h-1zM384 642h1v1h-1zM400 642h1v1h-1zM480 642h1v1h-1zM515 642h1v1h-1zM532 642h1v1h-1zM548 642h1v1h-1zM594 642h1v1h-1zM623 642h1v1h-1zM637 642h1v1h-1zM657 642h1v1h-1zM705 642h1v1h-1zM707 642h1v1h-1zM708 642h1v1h-1zM738 642h1v1h-1zM895 642h1v1h-1zM901 642h1v1h-1zM929 642h1v1h-1zM936 642h1v1h-1zM955 642h1v1h-1zM31 643h1v1h-1zM54 643h1v1h-1zM83 643h1v1h-1zM144 643h1v1h-1zM170 643h1v1h-1zM180 643h1v1h-1zM228 643h1v1h-1zM316 643h1v1h-1zM339 643h1v1h-1zM371 643h1v1h-1zM372 643h1v1h-1zM437 643h1v1h-1zM450 643h1v1h-1zM465 643h1v1h-1zM477 643h1v1h-1zM488 643h1v1h-1zM557 643h1v1h-1zM671 643h1v1h-1zM678 643h1v1h-1zM687 643h1v1h-1zM771 643h1v1h-1zM777 643h1v1h-1zM787 643h1v1h-1zM807 643h1v1h-1zM847 643h1v1h-1zM872 643h1v1h-1zM875 643h1v1h-1zM890 643h1v1h-1zM904 643h1v1h-1zM905 643h1v1h-1zM926 643h1v1h-1zM946 643h1v1h-1zM74 644h1v1h-1zM76 644h1v1h-1zM113 644h1v1h-1zM172 644h1v1h-1zM233 644h1v1h-1zM378 644h1v1h-1zM497 644h1v1h-1zM554 644h1v1h-1zM590 644h1v1h-1zM625 644h1v1h-1zM636 644h1v1h-1zM638 644h1v1h-1zM695 644h1v1h-1zM714 644h1v1h-1zM788 644h1v1h-1zM823 644h1v1h-1zM951 644h1v1h-1zM956 644h1v1h-1zM87 645h1v1h-1zM164 645h1v1h-1zM177 645h1v1h-1zM183 645h1v1h-1zM195 645h1v1h-1zM226 645h1v1h-1zM244 645h1v1h-1zM329 645h1v1h-1zM345 645h1v1h-1zM375 645h1v1h-1zM386 645h1v1h-1zM500 645h1v1h-1zM543 645h1v1h-1zM549 645h1v1h-1zM569 645h1v1h-1zM573 645h1v1h-1zM624 645h1v1h-1zM652 645h1v1h-1zM654 645h1v1h-1zM682 645h1v1h-1zM701 645h1v1h-1zM837 645h1v1h-1zM902 645h1v1h-1zM962 645h1v1h-1zM100 646h1v1h-1zM162 646h1v1h-1zM305 646h1v1h-1zM333 646h1v1h-1zM391 646h1v1h-1zM450 646h1v1h-1zM458 646h1v1h-1zM574 646h1v1h-1zM618 646h1v1h-1zM632 646h1v1h-1zM819 646h1v1h-1zM952 646h1v1h-1z"/><path fill="#e0e0e0" d="M46 2h1v1h-1zM71 2h1v1h-1zM156 2h1v1h-1zM158 2h1v1h-1zM169 2h1v1h-1zM218 2h1v1h-1zM260 2h1v1h-1zM382 2h1v1h-1zM428 2h1v1h-1zM493 2h1v1h-1zM513 2h1v1h-1zM545 2h1v1h-1zM546 2h1v1h-1zM600 2h1v1h-1zM739 2h1v1h-1zM747 2h1v1h-1zM833 2h1v1h-1zM888 2h1v1h-1zM943 2h1v1h-1zM953 2h1v1h-1zM54 3h1v1h-1zM62 3h1v1h-1zM84 3h1v1h-1zM181 3h1v1h-1zM204 3h1v1h-1zM226 3h1v1h-1zM255 3h1v1h-1zM268 3h1v1h-1zM275 3h1v1h-1zM277 3h1v1h-1zM279 3h1v1h-1zM298 3h1v1h-1zM316 3h1v1h-1zM334 3h1v1h-1zM342 3h1v1h-1zM364 3h1v1h-1zM407 3h1v1h-1zM417 3h1v1h-1zM452 3h1v1h-1zM488 3h1v1h-1zM512 3h1v1h-1zM519 3h1v1h-1zM655 3h1v1h-1zM673 3h1v1h-1zM786 3h1v1h-1zM802 3h1v1h-1zM817 3h1v1h-1zM823 3h1v1h-1zM877 3h1v1h-1zM1004 25h1v1h-1zM1004 26h1v1h-1zM6 37h1v1h-1zM1004 49h1v1h-1zM1004 50h1v1h-1zM6 51h1v1h-1zM1003 64h1v1h-1zM6 71h1v1h-1zM7 85h1v1h-1zM1004 85h1v1h-1zM7 102h1v1h-1zM1003 105h1v1h-1zM1004 110h1v1h-1zM6 125h1v1h-1zM1003 128h1v1h-1zM1003 143h1v1h-1zM1004 150h1v1h-1zM6 162h1v1h-1zM6 179h1v1h-1zM1004 183h1v1h-1zM1003 190h1v1h-1zM1003 191h1v1h-1zM1003 193h1v1h-1zM1004 204h1v1h-1zM7 209h1v1h-1zM6 214h1v1h-1zM1003 218h1v1h-1zM7 220h1v1h-1zM6 237h1v1h-1zM6 247h1v1h-1zM7 256h1v1h-1zM1003 270h1v1h-1zM1003 277h1v1h-1zM7 280h1v1h-1zM1004 323h1v1h-1zM1004 336h1v1h-1zM1003 342h1v1h-1zM1004 342h1v1h-1zM7 346h1v1h-1zM1004 346h1v1h-1zM1004 349h1v1h-1zM1003 360h1v1h-1zM1004 374h1v1h-1zM1004 384h1v1h-1zM1003 387h1v1h-1zM6 406h1v1h-1zM6 413h1v1h-1zM1003 414h1v1h-1zM7 426h1v1h-1zM7 428h1v1h-1zM7 432h1v1h-1zM1003 439h1v1h-1zM6 444h1v1h-1zM1003 446h1v1h-1zM7 448h1v1h-1zM1004 463h1v1h-1zM7 488h1v1h-1zM1003 488h1v1h-1zM6 501h1v1h-1zM1003 501h1v1h-1zM6 506h1v1h-1zM7 507h1v1h-1zM6 530h1v1h-1zM1003 530h1v1h-1zM1004 544h1v1h-1zM7 546h1v1h-1zM1003 546h1v1h-1zM6 555h1v1h-1zM1003 566h1v1h-1zM1004 566h1v1h-1zM1004 580h1v1h-1zM7 581h1v1h-1zM1004 596h1v1h-1zM1003 607h1v1h-1zM7 618h1v1h-1zM8 625h1v1h-1zM1008 633h1v1h-1zM5 636h1v1h-1zM12 639h1v1h-1zM35 642h1v1h-1zM63 642h1v1h-1zM87 642h1v1h-1zM98 642h1v1h-1zM133 642h1v1h-1zM323 642h1v1h-1zM343 642h1v1h-1zM351 642h1v1h-1zM354 642h1v1h-1zM380 642h1v1h-1zM403 642h1v1h-1zM408 642h1v1h-1zM463 642h1v1h-1zM522 642h1v1h-1zM529 642h1v1h-1zM596 642h1v1h-1zM769 642h1v1h-1zM807 642h1v1h-1zM927 642h1v1h-1zM943 642h1v1h-1zM974 642h1v1h-1zM183 643h1v1h-1zM234 643h1v1h-1zM246 643h1v1h-1zM271 643h1v1h-1zM398 643h1v1h-1zM406 643h1v1h-1zM538 643h1v1h-1zM573 643h1v1h-1zM579 643h1v1h-1zM589 643h1v1h-1zM644 643h1v1h-1zM688 643h1v1h-1zM714 643h1v1h-1zM752 643h1v1h-1zM765 643h1v1h-1zM767 643h1v1h-1zM805 643h1v1h-1zM811 643h1v1h-1zM883 643h1v1h-1zM917 643h1v1h-1zM70 644h1v1h-1zM79 644h1v1h-1zM87 644h1v1h-1zM182 644h1v1h-1zM192 644h1v1h-1zM210 644h1v1h-1zM238 644h1v1h-1zM252 644h1v1h-1zM270 644h1v1h-1zM302 644h1v1h-1zM322 644h1v1h-1zM370 644h1v1h-1zM383 644h1v1h-1zM473 644h1v1h-1zM579 644h1v1h-1zM581 644h1v1h-1zM586 644h1v1h-1zM746 644h1v1h-1zM758 644h1v1h-1zM762 644h1v1h-1zM813 644h1v1h-1zM814 644h1v1h-1zM821 644h1v1h-1zM924 644h1v1h-1zM45 645h1v1h-1zM96 645h1v1h-1zM122 645h1v1h-1zM143 645h1v1h-1zM158 645h1v1h-1zM211 645h1v1h-1zM265 645h1v1h-1zM298 645h1v1h-1zM354 645h1v1h-1zM393 645h1v1h-1zM463 645h1v1h-1zM508 645h1v1h-1zM595 645h1v1h-1zM641 645h1v1h-1zM685 645h1v1h-1zM712 645h1v1h-1zM776 645h1v1h-1zM777 645h1v1h-1zM871 645h1v1h-1zM882 645h1v1h-1zM889 645h1v1h-1zM959 645h1v1h-1zM992 645h1v1h-1zM30 646h1v1h-1zM46 646h1v1h-1zM142 646h1v1h-1zM155 646h1v1h-1zM178 646h1v1h-1zM212 646h1v1h-1zM237 646h1v1h-1zM240 646h1v1h-1zM277 646h1v1h-1zM311 646h1v1h-1zM355 646h1v1h-1zM488 646h1v1h-1zM493 646h1v1h-1zM501 646h1v1h-1zM597 646h1v1h-1zM623 646h1v1h-1zM664 646h1v1h-1zM703 646h1v1h-1zM711 646h1v1h-1zM829 646h1v1h-1zM846 646h1v1h-1zM954 646h1v1h-1z"/><path fill="#7c7c7c" d="M123 4h1v1h-1zM126 4h1v1h-1zM133 4h1v1h-1zM219 4h1v1h-1zM250 4h1v1h-1zM254 4h1v1h-1zM260 4h1v1h-1zM261 4h1v1h-1zM372 4h1v1h-1zM407 4h1v1h-1zM430 4h1v1h-1zM445 4h1v1h-1zM460 4h1v1h-1zM571 4h1v1h-1zM627 4h1v1h-1zM631 4h1v1h-1zM646 4h1v1h-1zM669 4h1v1h-1zM697 4h1v1h-1zM717 4h1v1h-1zM731 4h1v1h-1zM735 4h1v1h-1zM772 4h1v1h-1zM789 4h1v1h-1zM799 4h1v1h-1zM806 4h1v1h-1zM835 4h1v1h-1zM880 4h1v1h-1zM881 4h1v1h-1zM911 4h1v1h-1zM920 4h1v1h-1zM921 4h1v1h-1zM945 4h1v1h-1zM961 4h1v1h-1zM147 5h1v1h-1zM210 5h1v1h-1zM212 5h1v1h-1zM216 5h1v1h-1zM258 5h1v1h-1zM269 5h1v1h-1zM280 5h1v1h-1zM288 5h1v1h-1zM321 5h1v1h-1zM358 5h1v1h-1zM362 5h1v1h-1zM395 5h1v1h-1zM416 5h1v1h-1zM456 5h1v1h-1zM474 5h1v1h-1zM490 5h1v1h-1zM555 5h1v1h-1zM584 5h1v1h-1zM618 5h1v1h-1zM628 5h1v1h-1zM686 5h1v1h-1zM700 5h1v1h-1zM711 5h1v1h-1zM759 5h1v1h-1zM901 5h1v1h-1zM904 5h1v1h-1zM907 5h1v1h-1zM908 5h1v1h-1zM946 5h1v1h-1zM93 6h1v1h-1zM214 6h1v1h-1zM251 6h1v1h-1zM260 6h1v1h-1zM278 6h1v1h-1zM356 6h1v1h-1zM359 6h1v1h-1zM404 6h1v1h-1zM410 6h1v1h-1zM449 6h1v1h-1zM552 6h1v1h-1zM595 6h1v1h-1zM665 6h1v1h-1zM674 6h1v1h-1zM742 6h1v1h-1zM755 6h1v1h-1zM758 6h1v1h-1zM785 6h1v1h-1zM807 6h1v1h-1zM887 6h1v1h-1zM934 6h1v1h-1zM947 6h1v1h-1zM971 6h1v1h-1zM984 6h1v1h-1zM996 8h1v1h-1zM12 11h1v1h-1zM998 11h1v1h-1zM11 15h1v1h-1zM8 20h1v1h-1zM10 34h1v1h-1zM10 48h1v1h-1zM1002 49h1v1h-1zM1000 50h1v1h-1zM1001 50h1v1h-1zM9 52h1v1h-1zM8 54h1v1h-1zM10 54h1v1h-1zM10 57h1v1h-1zM1002 61h1v1h-1zM8 66h1v1h-1zM1001 68h1v1h-1zM1001 72h1v1h-1zM8 73h1v1h-1zM1001 82h1v1h-1zM1000 83h1v1h-1zM10 91h1v1h-1zM1000 95h1v1h-1zM1001 97h1v1h-1zM9 98h1v1h-1zM10 100h1v1h-1zM8 101h1v1h-1zM10 101h1v1h-1zM10 103h1v1h-1zM8 106h1v1h-1zM8 107h1v1h-1zM10 112h1v1h-1zM1002 114h1v1h-1zM1002 115h1v1h-1zM1002 118h1v1h-1zM9 120h1v1h-1zM1000 129h1v1h-1zM10 137h1v1h-1zM1002 155h1v1h-1zM1000 163h1v1h-1zM1002 172h1v1h-1zM9 177h1v1h-1zM1002 179h1v1h-1zM1001 180h1v1h-1zM1001 181h1v1h-1zM10 192h1v1h-1zM1002 195h1v1h-1zM1000 197h1v1h-1zM9 201h1v1h-1zM1000 202h1v1h-1zM8 211h1v1h-1zM9 249h1v1h-1zM8 252h1v1h-1zM1001 264h1v1h-1zM1000 265h1v1h-1zM8 267h1v1h-1zM8 275h1v1h-1zM9 277h1v1h-1zM1000 284h1v1h-1zM9 286h1v1h-1zM1000 289h1v1h-1zM10 291h1v1h-1zM1000 298h1v1h-1zM8 299h1v1h-1zM9 317h1v1h-1zM1002 321h1v1h-1zM10 327h1v1h-1zM1001 332h1v1h-1zM1002 335h1v1h-1zM8 338h1v1h-1zM10 358h1v1h-1zM1000 358h1v1h-1zM1000 367h1v1h-1zM9 368h1v1h-1zM10 379h1v1h-1zM9 394h1v1h-1zM10 401h1v1h-1zM1002 414h1v1h-1zM9 424h1v1h-1zM10 433h1v1h-1zM1001 435h1v1h-1zM1001 438h1v1h-1zM9 439h1v1h-1zM1001 439h1v1h-1zM1000 441h1v1h-1zM9 451h1v1h-1zM1002 464h1v1h-1zM10 466h1v1h-1zM1002 472h1v1h-1zM8 484h1v1h-1zM1002 503h1v1h-1zM1000 513h1v1h-1zM8 526h1v1h-1zM1001 537h1v1h-1zM8 541h1v1h-1zM10 541h1v1h-1zM10 542h1v1h-1zM1001 545h1v1h-1zM10 548h1v1h-1zM9 555h1v1h-1zM1001 562h1v1h-1zM1002 571h1v1h-1zM1000 576h1v1h-1zM1001 576h1v1h-1zM10 580h1v1h-1zM8 582h1v1h-1zM1002 584h1v1h-1zM1001 594h1v1h-1zM1002 603h1v1h-1zM10 607h1v1h-1zM1000 615h1v1h-1zM7 631h1v1h-1zM1001 631h1v1h-1zM35 638h1v1h-1zM57 638h1v1h-1zM67 638h1v1h-1zM68 638h1v1h-1zM93 638h1v1h-1zM103 638h1v1h-1zM225 638h1v1h-1zM261 638h1v1h-1zM361 638h1v1h-1zM421 638h1v1h-1zM429 638h1v1h-1zM456 638h1v1h-1zM458 638h1v1h-1zM462 638h1v1h-1zM483 638h1v1h-1zM496 638h1v1h-1zM535 638h1v1h-1zM545 638h1v1h-1zM584 638h1v1h-1zM590 638h1v1h-1zM599 638h1v1h-1zM600 638h1v1h-1zM639 638h1v1h-1zM670 638h1v1h-1zM740 638h1v1h-1zM775 638h1v1h-1zM784 638h1v1h-1zM892 638h1v1h-1zM899 638h1v1h-1zM917 638h1v1h-1zM951 638h1v1h-1zM40 639h1v1h-1zM81 639h1v1h-1zM180 639h1v1h-1zM188 639h1v1h-1zM195 639h1v1h-1zM210 639h1v1h-1zM229 639h1v1h-1zM285 639h1v1h-1zM307 639h1v1h-1zM316 639h1v1h-1zM360 639h1v1h-1zM380 639h1v1h-1zM420 639h1v1h-1zM437 639h1v1h-1zM442 639h1v1h-1zM478 639h1v1h-1zM483 639h1v1h-1zM492 639h1v1h-1zM501 639h1v1h-1zM520 639h1v1h-1zM574 639h1v1h-1zM578 639h1v1h-1zM604 639h1v1h-1zM606 639h1v1h-1zM634 639h1v1h-1zM756 639h1v1h-1zM779 639h1v1h-1zM780 639h1v1h-1zM893 639h1v1h-1zM153 640h1v1h-1zM159 640h1v1h-1zM186 640h1v1h-1zM226 640h1v1h-1zM251 640h1v1h-1zM299 640h1v1h-1zM368 640h1v1h-1zM382 640h1v1h-1zM423 640h1v1h-1zM478 640h1v1h-1zM526 640h1v1h-1zM572 640h1v1h-1zM617 640h1v1h-1zM664 640h1v1h-1zM672 640h1v1h-1zM729 640h1v1h-1zM798 640h1v1h-1zM853 640h1v1h-1zM880 640h1v1h-1zM888 640h1v1h-1zM992 640h1v1h-1zM96 641h1v1h-1zM152 641h1v1h-1zM195 641h1v1h-1zM234 641h1v1h-1zM244 641h1v1h-1zM267 641h1v1h-1zM338 641h1v1h-1zM390 641h1v1h-1zM445 641h1v1h-1zM473 641h1v1h-1zM493 641h1v1h-1zM546 641h1v1h-1zM595 641h1v1h-1zM671 641h1v1h-1zM711 641h1v1h-1zM747 641h1v1h-1zM792 641h1v1h-1zM859 641h1v1h-1zM883 641h1v1h-1zM915 641h1v1h-1zM920 641h1v1h-1z"/></svg>
<div id="win">
<div id="ribbon"></div>
<div id="left"></div>
<div id="right"></div>
</div>
<div class="abs" style="left:71px;top:15px;width:1px;height:78px;background:#e1e1e1"></div>
<div class="abs" style="left:266px;top:15px;width:1px;height:78px;background:#e1e1e1"></div>
<div class="abs" style="left:79px;top:14px;width:57px;height:66px;background:#b2e1e6"></div>
<div class="t" style="left:-5px;width:100px;text-align:center;top:54.45px;font-size:11px;line-height:11px;color:#2a2a2a">Apply</div>
<div class="t" style="left:-5px;width:100px;text-align:center;top:66.65px;font-size:11px;line-height:11px;color:#2a2a2a">&amp; Close</div>
<div class="t" style="left:57px;width:100px;text-align:center;top:54.45px;font-size:11px;line-height:11px;color:#2a2a2a">Properties</div>
<div class="t" style="left:107px;width:100px;text-align:center;top:54.45px;font-size:11px;line-height:11px;color:#2a2a2a">Size</div>
<div class="t" style="left:149.5px;width:100px;text-align:center;top:54.45px;font-size:11px;line-height:11px;color:#2a2a2a">Color</div>
<div class="t" style="left:149.5px;width:100px;text-align:center;top:66.65px;font-size:11px;line-height:11px;color:#2a2a2a">Scheme</div>
<div class="t" style="left:192px;width:100px;text-align:center;top:54.45px;font-size:11px;line-height:11px;color:#2a2a2a">Text</div>
<div class="t" style="left:121px;width:100px;text-align:center;top:84.25px;font-size:11px;line-height:11px;color:#6a6a80">Interaction</div>
<div class="t" style="left:28px;top:123.14px;font-size:17.95px;line-height:17.95px;color:#4257a8;font-weight:normal;">Interaction Properties</div>
<svg class="abs" style="left:28px;top:165px" width="13" height="13" viewBox="0 0 13 13"><rect x="0.5" y="0.5" width="12" height="12" fill="#fff" stroke="#4d4d4d"/><path d="M2.6 6.6 L5.2 9.3 L10.4 3.2" fill="none" stroke="#1a1a1a" stroke-width="1.6"/></svg>
<div class="t" style="left:46.5px;top:165.80px;font-size:12px;line-height:12px;color:#333;font-weight:normal;">Title:</div>
<div class="abs" style="left:76px;top:158px;width:248px;height:24px;background:#fff;border:1px solid #bfbfbf"></div>
<div class="t" style="left:82.3px;top:165.36px;font-size:11.7px;line-height:11.7px;color:#1a1a1a;font-weight:normal;">Setting SMART goals</div>
<div class="abs" style="left:28px;top:203px;width:296px;height:22px;background:#e8e8e8"></div>
<div class="t" style="left:37.4px;top:208.16px;font-size:12.4px;line-height:12.4px;color:#5c5c5c;font-weight:bold;transform:scaleX(0.935);transform-origin:0 0">Appearance</div>
<div class="t" style="left:37.4px;top:243.50px;font-size:12px;line-height:12px;color:#333;font-weight:normal;">Tabs position:</div>
<div class="abs" style="left:174px;top:237px;width:150px;height:23px;background:#fff;border:1px solid #c2c2c2"></div>
<div class="t" style="left:179.2px;top:243.30px;font-size:12px;line-height:12px;color:#1e1e1e;font-weight:normal;">Left</div>
<svg class="abs" style="left:309px;top:246.5px" width="11" height="7" viewBox="0 0 11 7"><path d="M1 1 L5.35 5.2 L9.7 1" fill="none" stroke="#606060" stroke-width="1"/></svg>
<div class="t" style="left:37.4px;top:273.00px;font-size:12px;line-height:12px;color:#333;font-weight:normal;">Tabs width:</div>
<div class="abs" style="left:256px;top:267px;width:68px;height:23px;background:#fff;border:1px solid #c2c2c2"></div>
<div class="t" style="left:232.5px;width:60px;text-align:right;top:273.30px;font-size:12px;line-height:12px;color:#1e1e1e">24%</div>
<svg class="abs" style="left:311px;top:267px" width="9" height="22" viewBox="0 0 9 22"><path d="M1.9 8 L4.5 5 L7.1 8 Z M1.9 16 L4.5 19 L7.1 16 Z" fill="#7a7a7a"/></svg>
<div class="t" style="left:37.4px;top:302.80px;font-size:12px;line-height:12px;color:#333;font-weight:normal;">Tabs height:</div>
<div class="abs" style="left:174px;top:296px;width:150px;height:23px;background:#fff;border:1px solid #c2c2c2"></div>
<div class="t" style="left:179.2px;top:302.30px;font-size:12px;line-height:12px;color:#1e1e1e;font-weight:normal;">Fixed</div>
<svg class="abs" style="left:309px;top:305.5px" width="11" height="7" viewBox="0 0 11 7"><path d="M1 1 L5.35 5.2 L9.7 1" fill="none" stroke="#606060" stroke-width="1"/></svg>
<div class="abs" style="left:28px;top:338px;width:296px;height:22px;background:#e8e8e8"></div>
<div class="t" style="left:37.4px;top:343.86px;font-size:12.4px;line-height:12.4px;color:#5c5c5c;font-weight:bold;transform:scaleX(0.935);transform-origin:0 0">Description</div>
<div class="t" style="left:37.4px;top:379.00px;font-size:12px;line-height:12px;color:#333;font-weight:normal;">Text animation:</div>
<div class="abs" style="left:174px;top:372px;width:150px;height:23px;background:#fff;border:1px solid #c2c2c2"></div>
<div class="t" style="left:179.2px;top:378.30px;font-size:12px;line-height:12px;color:#1e1e1e;font-weight:normal;">Fade</div>
<svg class="abs" style="left:309px;top:381.5px" width="11" height="7" viewBox="0 0 11 7"><path d="M1 1 L5.35 5.2 L9.7 1" fill="none" stroke="#606060" stroke-width="1"/></svg>
<div class="abs" style="left:28px;top:414px;width:296px;height:22px;background:#e8e8e8"></div>
<div class="t" style="left:37.4px;top:419.36px;font-size:12.4px;line-height:12.4px;color:#5c5c5c;font-weight:bold;transform:scaleX(0.935);transform-origin:0 0">Interaction Player</div>
<div class="t" style="left:37.4px;top:455.40px;font-size:12px;line-height:12px;color:#333;font-weight:normal;">Font</div>
<div class="abs" style="left:174px;top:448px;width:150px;height:23px;background:#fff;border:1px solid #c2c2c2"></div>
<div class="t" style="left:179.2px;top:454.30px;font-size:12px;line-height:12px;color:#1e1e1e;font-weight:normal;">Open Sans</div>
<svg class="abs" style="left:309px;top:457.5px" width="11" height="7" viewBox="0 0 11 7"><path d="M1 1 L5.35 5.2 L9.7 1" fill="none" stroke="#606060" stroke-width="1"/></svg>
<svg class="abs" style="left:37px;top:482px" width="13" height="13" viewBox="0 0 13 13"><rect x="0.5" y="0.5" width="12" height="12" fill="#fff" stroke="#4d4d4d"/><path d="M2.6 6.6 L5.2 9.3 L10.4 3.2" fill="none" stroke="#1a1a1a" stroke-width="1.6"/></svg>
<div class="t" style="left:55.4px;top:482.60px;font-size:12px;line-height:12px;color:#333;font-weight:normal;">Display navigation buttons</div>
<div class="t" style="left:37.4px;top:508.10px;font-size:12px;line-height:12px;color:#333;font-weight:normal;">Corner Radius</div>
<div class="abs" style="left:256px;top:502px;width:68px;height:23px;background:#fff;border:1px solid #c2c2c2"></div>
<div class="t" style="left:222.5px;width:60px;text-align:right;top:508.30px;font-size:12px;line-height:12px;color:#1e1e1e">10</div>
<svg class="abs" style="left:311px;top:502px" width="9" height="22" viewBox="0 0 9 22"><path d="M1.9 8 L4.5 5 L7.1 8 Z M1.9 16 L4.5 19 L7.1 16 Z" fill="#7a7a7a"/></svg>
<div class="abs" style="left:28px;top:544px;width:296px;height:22px;background:#e8e8e8"></div>
<div class="t" style="left:37.4px;top:549.86px;font-size:12.4px;line-height:12.4px;color:#5c5c5c;font-weight:bold;transform:scaleX(0.935);transform-origin:0 0">Smartphone View</div>
<svg class="abs" style="left:37px;top:579px" width="13" height="13" viewBox="0 0 13 13"><rect x="0.5" y="0.5" width="12" height="12" fill="#fff" stroke="#4d4d4d"/></svg>
<div class="t" style="left:55.4px;top:580.10px;font-size:12px;line-height:12px;color:#333;font-weight:normal;">Optimize the interaction for smartphones</div>
<svg class="abs" style="left:276.5px;top:578.5px" width="12" height="12" viewBox="0 0 12 12"><circle cx="6" cy="6" r="5.2" fill="none" stroke="#86ace0" stroke-width="0.75"/><path d="M6 5.2 V8.6" stroke="#3d62a8" stroke-width="1.1"/><circle cx="6" cy="3.7" r="0.65" fill="#3d62a8"/></svg>
<div class="abs" style="left:381px;top:129px;width:573px;height:473px;background:#fff;border-radius:4px"></div>
<div class="abs" style="left:388px;top:136px;width:559px;height:418.5px;background:#5e5e5e"></div>
<div class="abs" style="left:388px;top:136px;width:559px;height:21px;background:#2c2c2c"></div>
<div class="t" style="left:397px;top:142.17px;font-size:9.1px;line-height:9.1px;color:#7c7c7c;font-weight:bold;">Setting SMART goals</div>
<svg class="abs" style="left:919px;top:143px" width="21" height="21" viewBox="0 0 21 21"><circle cx="10.6" cy="10.5" r="9.8" fill="#000" fill-opacity="0.55"/><path d="M7.3 7.2 L13.9 13.8 M13.9 7.2 L7.3 13.8" stroke="#d8d8d8" stroke-width="1.3"/></svg>
<div class="abs" style="left:527.5px;top:167.5px;width:408.5px;height:376.5px;background:#606060"></div>
<div class="abs" style="left:527px;top:201px;width:1px;height:343.5px;background:#595959"></div>
<div class="abs" style="left:527px;top:544px;width:409px;height:1px;background:#595959"></div>
<div class="abs" style="left:935.5px;top:167.5px;width:1px;height:377px;background:#5a5a5a"></div>
<div class="abs" style="left:931.2px;top:171px;width:2.4px;height:282px;background:#6a6a6a;border-radius:1.2px"></div>
<div class="abs" style="left:399px;top:168px;width:129.5px;height:33px;background:#606060"></div>
<div class="abs" style="left:399px;top:201px;width:95px;height:1px;background:#585858"></div>
<div class="abs" style="left:399px;top:167.5px;width:537px;height:1px;background:#5a5a5a"></div>
<div class="t" style="left:408px;top:180.07px;font-size:9.8px;line-height:9.8px;color:#2a2a2a;font-weight:bold;transform:scaleX(0.84);transform-origin:0 0">S — Specific</div>
<div class="abs" style="left:399px;top:205.0px;width:130px;height:32.8px;background:#5d4719"></div>
<div class="t" style="left:408px;top:216.67px;font-size:9.8px;line-height:9.8px;color:#7a6d58;font-weight:bold;transform:scaleX(0.88);transform-origin:0 0">M — Measurable</div>
<div class="abs" style="left:399px;top:242.4px;width:130px;height:32.8px;background:#5d4719"></div>
<div class="t" style="left:408px;top:254.07px;font-size:9.8px;line-height:9.8px;color:#7a6d58;font-weight:bold;transform:scaleX(0.88);transform-origin:0 0">A — Achievable</div>
<div class="abs" style="left:399px;top:279.8px;width:130px;height:32.8px;background:#5d4719"></div>
<div class="t" style="left:408px;top:291.47px;font-size:9.8px;line-height:9.8px;color:#7a6d58;font-weight:bold;transform:scaleX(0.88);transform-origin:0 0">R — Relevant</div>
<div class="abs" style="left:399px;top:317.2px;width:130px;height:32.8px;background:#5d4719"></div>
<div class="t" style="left:408px;top:328.87px;font-size:9.8px;line-height:9.8px;color:#7a6d58;font-weight:bold;transform:scaleX(0.88);transform-origin:0 0">T — Time-bound</div>
<svg class="abs" style="left:836px;top:219px" width="82" height="165" viewBox="0 0 82 165">
<defs><linearGradient id="fg" x1="0" y1="0" x2="0" y2="1"><stop offset="0" stop-color="#47433f"/><stop offset="0.45" stop-color="#3f3b37"/><stop offset="1" stop-color="#343831"/></linearGradient><filter id="fb" x="0" y="0" width="1" height="1"><feGaussianBlur stdDeviation="0.6"/></filter></defs>
<g filter="url(#fb)"><rect width="82" height="165" fill="url(#fg)"/>
<ellipse cx="14" cy="114" rx="1.4" ry="2.2" fill="#4a4640" opacity="0.85"/><ellipse cx="81" cy="78" rx="1.2" ry="1.7" fill="#57504a" opacity="0.85"/><ellipse cx="65" cy="2" rx="1.7" ry="1.0" fill="#57504a" opacity="0.85"/><ellipse cx="62" cy="152" rx="0.9" ry="2.5" fill="#4a4640" opacity="0.85"/><ellipse cx="61" cy="144" rx="1.8" ry="2.4" fill="#30392d" opacity="0.85"/><ellipse cx="44" cy="114" rx="2.9" ry="1.4" fill="#4a4640" opacity="0.85"/><ellipse cx="13" cy="135" rx="2.6" ry="0.8" fill="#2c3529" opacity="0.85"/><ellipse cx="13" cy="120" rx="1.9" ry="1.1" fill="#464841" opacity="0.85"/><ellipse cx="3" cy="143" rx="1.0" ry="1.1" fill="#3b4538" opacity="0.85"/><ellipse cx="55" cy="132" rx="2.5" ry="2.1" fill="#4a4640" opacity="0.85"/><ellipse cx="48" cy="120" rx="2.0" ry="1.8" fill="#2c3529" opacity="0.85"/><ellipse cx="32" cy="56" rx="2.8" ry="1.5" fill="#2f2c29" opacity="0.85"/><ellipse cx="30" cy="74" rx="1.5" ry="1.6" fill="#37332f" opacity="0.85"/><ellipse cx="22" cy="138" rx="2.4" ry="2.5" fill="#3b4538" opacity="0.85"/><ellipse cx="41" cy="81" rx="2.1" ry="1.7" fill="#57504a" opacity="0.85"/><ellipse cx="47" cy="53" rx="1.0" ry="1.9" fill="#57504a" opacity="0.85"/><ellipse cx="51" cy="138" rx="1.6" ry="1.8" fill="#262824" opacity="0.85"/><ellipse cx="25" cy="17" rx="2.8" ry="1.1" fill="#514b45" opacity="0.85"/><ellipse cx="35" cy="26" rx="2.3" ry="2.3" fill="#514b45" opacity="0.85"/><ellipse cx="79" cy="67" rx="2.9" ry="1.8" fill="#2f2c29" opacity="0.85"/><ellipse cx="72" cy="81" rx="2.3" ry="2.4" fill="#37332f" opacity="0.85"/><ellipse cx="20" cy="93" rx="2.6" ry="2.1" fill="#464841" opacity="0.85"/><ellipse cx="40" cy="138" rx="2.7" ry="1.9" fill="#2c3529" opacity="0.85"/><ellipse cx="3" cy="41" rx="1.0" ry="1.4" fill="#37332f" opacity="0.85"/><ellipse cx="74" cy="162" rx="2.4" ry="0.9" fill="#4a4640" opacity="0.85"/><ellipse cx="11" cy="107" rx="1.9" ry="2.4" fill="#4a4640" opacity="0.85"/><ellipse cx="74" cy="60" rx="2.7" ry="1.8" fill="#2f2c29" opacity="0.85"/><ellipse cx="35" cy="96" rx="1.5" ry="1.7" fill="#464841" opacity="0.85"/><ellipse cx="23" cy="127" rx="1.6" ry="1.0" fill="#2c3529" opacity="0.85"/><ellipse cx="59" cy="44" rx="2.2" ry="2.2" fill="#4a4540" opacity="0.85"/><ellipse cx="48" cy="42" rx="2.5" ry="2.2" fill="#37332f" opacity="0.85"/><ellipse cx="11" cy="23" rx="1.0" ry="0.8" fill="#37332f" opacity="0.85"/><ellipse cx="37" cy="23" rx="2.2" ry="1.0" fill="#514b45" opacity="0.85"/><ellipse cx="44" cy="54" rx="2.8" ry="1.9" fill="#37332f" opacity="0.85"/><ellipse cx="15" cy="141" rx="2.4" ry="1.7" fill="#3b4538" opacity="0.85"/><ellipse cx="4" cy="117" rx="2.5" ry="2.1" fill="#4a4640" opacity="0.85"/><ellipse cx="1" cy="77" rx="1.7" ry="1.8" fill="#514b45" opacity="0.85"/><ellipse cx="70" cy="38" rx="2.1" ry="2.1" fill="#3a3d35" opacity="0.85"/><ellipse cx="20" cy="26" rx="2.8" ry="1.3" fill="#3a3d35" opacity="0.85"/><ellipse cx="41" cy="91" rx="1.0" ry="1.8" fill="#30392d" opacity="0.85"/><ellipse cx="42" cy="121" rx="1.5" ry="2.0" fill="#30392d" opacity="0.85"/><ellipse cx="43" cy="93" rx="2.2" ry="1.4" fill="#2c3529" opacity="0.85"/><ellipse cx="17" cy="11" rx="3.0" ry="1.0" fill="#3a3d35" opacity="0.85"/><ellipse cx="6" cy="12" rx="1.9" ry="2.4" fill="#37332f" opacity="0.85"/><ellipse cx="56" cy="116" rx="1.9" ry="1.5" fill="#464841" opacity="0.85"/><ellipse cx="33" cy="37" rx="2.3" ry="0.9" fill="#514b45" opacity="0.85"/><ellipse cx="23" cy="97" rx="2.4" ry="1.6" fill="#464841" opacity="0.85"/><ellipse cx="19" cy="64" rx="1.3" ry="2.4" fill="#37332f" opacity="0.85"/><ellipse cx="54" cy="6" rx="1.9" ry="2.0" fill="#2f2c29" opacity="0.85"/><ellipse cx="73" cy="129" rx="2.2" ry="1.9" fill="#4a4640" opacity="0.85"/><ellipse cx="60" cy="100" rx="1.4" ry="1.6" fill="#4a4640" opacity="0.85"/><ellipse cx="41" cy="50" rx="2.6" ry="2.4" fill="#37332f" opacity="0.85"/><ellipse cx="81" cy="1" rx="1.2" ry="2.3" fill="#4a4540" opacity="0.85"/><ellipse cx="59" cy="15" rx="1.0" ry="1.3" fill="#2f2c29" opacity="0.85"/><ellipse cx="77" cy="122" rx="3.0" ry="2.5" fill="#464841" opacity="0.85"/><ellipse cx="14" cy="71" rx="1.5" ry="1.9" fill="#3a3d35" opacity="0.85"/><ellipse cx="56" cy="43" rx="1.5" ry="1.2" fill="#514b45" opacity="0.85"/><ellipse cx="69" cy="25" rx="1.9" ry="1.2" fill="#3a3d35" opacity="0.85"/><ellipse cx="56" cy="118" rx="2.9" ry="1.6" fill="#3b4538" opacity="0.85"/><ellipse cx="36" cy="102" rx="2.3" ry="1.9" fill="#262824" opacity="0.85"/><ellipse cx="51" cy="16" rx="0.9" ry="2.2" fill="#2f2c29" opacity="0.85"/><ellipse cx="77" cy="116" rx="1.0" ry="1.8" fill="#2c3529" opacity="0.85"/><ellipse cx="33" cy="73" rx="1.3" ry="0.8" fill="#37332f" opacity="0.85"/><ellipse cx="45" cy="16" rx="1.2" ry="1.4" fill="#4a4540" opacity="0.85"/><ellipse cx="0" cy="27" rx="2.5" ry="2.2" fill="#57504a" opacity="0.85"/><ellipse cx="43" cy="8" rx="1.7" ry="2.3" fill="#2f2c29" opacity="0.85"/><ellipse cx="20" cy="95" rx="2.8" ry="2.3" fill="#30392d" opacity="0.85"/><ellipse cx="1" cy="96" rx="1.8" ry="2.2" fill="#2c3529" opacity="0.85"/><ellipse cx="81" cy="109" rx="0.9" ry="2.2" fill="#3b4538" opacity="0.85"/><ellipse cx="50" cy="102" rx="2.3" ry="1.9" fill="#464841" opacity="0.85"/><ellipse cx="13" cy="25" rx="1.5" ry="1.9" fill="#4a4540" opacity="0.85"/><ellipse cx="73" cy="12" rx="1.2" ry="1.0" fill="#514b45" opacity="0.85"/><ellipse cx="68" cy="59" rx="0.9" ry="0.9" fill="#4a4540" opacity="0.85"/><ellipse cx="41" cy="112" rx="1.7" ry="0.9" fill="#4a4640" opacity="0.85"/><ellipse cx="19" cy="59" rx="1.7" ry="2.0" fill="#4a4540" opacity="0.85"/><ellipse cx="60" cy="87" rx="1.5" ry="1.2" fill="#2c3529" opacity="0.85"/><ellipse cx="41" cy="120" rx="2.0" ry="1.9" fill="#30392d" opacity="0.85"/><ellipse cx="14" cy="117" rx="1.9" ry="2.3" fill="#464841" opacity="0.85"/><ellipse cx="36" cy="3" rx="2.3" ry="1.2" fill="#4a4540" opacity="0.85"/><ellipse cx="64" cy="149" rx="2.1" ry="1.0" fill="#30392d" opacity="0.85"/><ellipse cx="25" cy="35" rx="2.9" ry="2.1" fill="#37332f" opacity="0.85"/><ellipse cx="1" cy="58" rx="1.4" ry="0.8" fill="#57504a" opacity="0.85"/><ellipse cx="31" cy="124" rx="2.8" ry="1.7" fill="#3b4538" opacity="0.85"/><ellipse cx="72" cy="34" rx="2.0" ry="2.1" fill="#57504a" opacity="0.85"/><ellipse cx="61" cy="146" rx="2.8" ry="1.2" fill="#262824" opacity="0.85"/><ellipse cx="49" cy="58" rx="2.6" ry="1.4" fill="#3a3d35" opacity="0.85"/><ellipse cx="11" cy="4" rx="2.9" ry="2.1" fill="#37332f" opacity="0.85"/><ellipse cx="81" cy="122" rx="1.0" ry="2.4" fill="#4a4640" opacity="0.85"/><ellipse cx="43" cy="148" rx="1.5" ry="1.1" fill="#30392d" opacity="0.85"/><ellipse cx="54" cy="101" rx="2.5" ry="2.1" fill="#464841" opacity="0.85"/><ellipse cx="53" cy="42" rx="2.6" ry="1.2" fill="#37332f" opacity="0.85"/><ellipse cx="39" cy="7" rx="1.3" ry="2.1" fill="#37332f" opacity="0.85"/><ellipse cx="28" cy="73" rx="2.4" ry="2.0" fill="#4a4540" opacity="0.85"/><ellipse cx="81" cy="62" rx="0.9" ry="2.1" fill="#37332f" opacity="0.85"/><ellipse cx="71" cy="49" rx="1.2" ry="1.2" fill="#37332f" opacity="0.85"/><ellipse cx="60" cy="134" rx="2.3" ry="0.8" fill="#464841" opacity="0.85"/><ellipse cx="75" cy="22" rx="1.8" ry="1.5" fill="#4a4540" opacity="0.85"/><ellipse cx="52" cy="99" rx="1.0" ry="1.2" fill="#4a4640" opacity="0.85"/><ellipse cx="9" cy="108" rx="2.5" ry="2.1" fill="#4a4640" opacity="0.85"/><ellipse cx="76" cy="33" rx="2.8" ry="0.9" fill="#4a4540" opacity="0.85"/><ellipse cx="25" cy="105" rx="2.5" ry="2.4" fill="#3b4538" opacity="0.85"/><ellipse cx="9" cy="102" rx="1.3" ry="1.2" fill="#4a4640" opacity="0.85"/><ellipse cx="41" cy="118" rx="0.9" ry="2.3" fill="#3b4538" opacity="0.85"/><ellipse cx="76" cy="86" rx="1.2" ry="1.0" fill="#2c3529" opacity="0.85"/><ellipse cx="5" cy="115" rx="0.9" ry="2.1" fill="#464841" opacity="0.85"/><ellipse cx="49" cy="84" rx="1.3" ry="2.0" fill="#4a4640" opacity="0.85"/><ellipse cx="40" cy="89" rx="1.6" ry="1.9" fill="#30392d" opacity="0.85"/><ellipse cx="52" cy="60" rx="1.7" ry="1.6" fill="#4a4540" opacity="0.85"/><ellipse cx="53" cy="119" rx="1.3" ry="2.1" fill="#30392d" opacity="0.85"/><ellipse cx="2" cy="106" rx="2.7" ry="2.1" fill="#464841" opacity="0.85"/><ellipse cx="74" cy="124" rx="1.9" ry="1.1" fill="#262824" opacity="0.85"/><ellipse cx="66" cy="54" rx="1.5" ry="2.4" fill="#4a4540" opacity="0.85"/><ellipse cx="37" cy="33" rx="2.2" ry="2.2" fill="#514b45" opacity="0.85"/><ellipse cx="18" cy="18" rx="2.2" ry="1.9" fill="#57504a" opacity="0.85"/><ellipse cx="10" cy="20" rx="2.3" ry="1.7" fill="#3a3d35" opacity="0.85"/><ellipse cx="7" cy="40" rx="2.0" ry="1.2" fill="#57504a" opacity="0.85"/><ellipse cx="35" cy="130" rx="2.3" ry="2.2" fill="#30392d" opacity="0.85"/><ellipse cx="33" cy="158" rx="1.6" ry="2.1" fill="#4a4640" opacity="0.85"/><ellipse cx="3" cy="82" rx="2.5" ry="1.8" fill="#37332f" opacity="0.85"/><ellipse cx="15" cy="153" rx="2.5" ry="1.2" fill="#2c3529" opacity="0.85"/><ellipse cx="39" cy="43" rx="1.4" ry="1.4" fill="#2f2c29" opacity="0.85"/><ellipse cx="40" cy="44" rx="0.9" ry="1.3" fill="#4a4540" opacity="0.85"/><ellipse cx="7" cy="54" rx="2.5" ry="1.1" fill="#2f2c29" opacity="0.85"/><ellipse cx="25" cy="18" rx="2.3" ry="2.3" fill="#3a3d35" opacity="0.85"/><ellipse cx="4" cy="123" rx="1.9" ry="1.0" fill="#464841" opacity="0.85"/><ellipse cx="80" cy="36" rx="2.4" ry="0.9" fill="#4a4540" opacity="0.85"/><ellipse cx="51" cy="100" rx="1.2" ry="2.4" fill="#464841" opacity="0.85"/><ellipse cx="35" cy="33" rx="1.3" ry="1.1" fill="#514b45" opacity="0.85"/><ellipse cx="79" cy="2" rx="2.7" ry="2.4" fill="#2f2c29" opacity="0.85"/><ellipse cx="20" cy="59" rx="1.2" ry="2.0" fill="#37332f" opacity="0.85"/><ellipse cx="74" cy="30" rx="1.9" ry="1.4" fill="#4a4540" opacity="0.85"/><ellipse cx="73" cy="140" rx="1.4" ry="2.1" fill="#3b4538" opacity="0.85"/><ellipse cx="57" cy="121" rx="2.7" ry="1.2" fill="#2c3529" opacity="0.85"/><ellipse cx="82" cy="54" rx="2.6" ry="2.1" fill="#37332f" opacity="0.85"/><ellipse cx="59" cy="5" rx="1.4" ry="1.3" fill="#57504a" opacity="0.85"/><ellipse cx="65" cy="101" rx="1.3" ry="1.0" fill="#4a4640" opacity="0.85"/><ellipse cx="2" cy="35" rx="3.0" ry="1.6" fill="#37332f" opacity="0.85"/><ellipse cx="58" cy="85" rx="2.2" ry="1.5" fill="#3b4538" opacity="0.85"/><ellipse cx="54" cy="49" rx="1.9" ry="0.9" fill="#2f2c29" opacity="0.85"/><ellipse cx="58" cy="124" rx="1.8" ry="2.1" fill="#3b4538" opacity="0.85"/><ellipse cx="4" cy="105" rx="1.2" ry="1.8" fill="#2c3529" opacity="0.85"/><ellipse cx="54" cy="144" rx="1.7" ry="1.5" fill="#262824" opacity="0.85"/><ellipse cx="60" cy="19" rx="0.8" ry="1.5" fill="#4a4540" opacity="0.85"/><ellipse cx="65" cy="145" rx="2.2" ry="1.3" fill="#464841" opacity="0.85"/><ellipse cx="58" cy="140" rx="2.0" ry="1.9" fill="#3b4538" opacity="0.85"/><ellipse cx="52" cy="34" rx="2.6" ry="1.3" fill="#2f2c29" opacity="0.85"/><ellipse cx="64" cy="1" rx="0.9" ry="2.1" fill="#4a4540" opacity="0.85"/><ellipse cx="57" cy="83" rx="2.6" ry="1.1" fill="#2c3529" opacity="0.85"/><ellipse cx="47" cy="91" rx="2.7" ry="1.9" fill="#3b4538" opacity="0.85"/><ellipse cx="14" cy="126" rx="1.2" ry="2.0" fill="#2c3529" opacity="0.85"/><ellipse cx="34" cy="54" rx="1.7" ry="2.1" fill="#3a3d35" opacity="0.85"/><ellipse cx="70" cy="123" rx="0.9" ry="1.3" fill="#4a4640" opacity="0.85"/><ellipse cx="19" cy="136" rx="3.0" ry="0.9" fill="#3b4538" opacity="0.85"/><ellipse cx="79" cy="152" rx="2.4" ry="2.4" fill="#464841" opacity="0.85"/><ellipse cx="15" cy="119" rx="3.0" ry="2.3" fill="#464841" opacity="0.85"/><ellipse cx="75" cy="14" rx="2.0" ry="2.3" fill="#3a3d35" opacity="0.85"/><ellipse cx="76" cy="135" rx="2.2" ry="0.8" fill="#2c3529" opacity="0.85"/><ellipse cx="63" cy="163" rx="1.1" ry="1.9" fill="#30392d" opacity="0.85"/><ellipse cx="52" cy="10" rx="1.0" ry="1.5" fill="#37332f" opacity="0.85"/><ellipse cx="81" cy="142" rx="1.9" ry="1.3" fill="#464841" opacity="0.85"/><ellipse cx="46" cy="105" rx="1.5" ry="2.4" fill="#3b4538" opacity="0.85"/><ellipse cx="12" cy="152" rx="1.5" ry="1.2" fill="#4a4640" opacity="0.85"/><ellipse cx="29" cy="89" rx="1.6" ry="1.7" fill="#2c3529" opacity="0.85"/><ellipse cx="75" cy="106" rx="1.8" ry="1.6" fill="#3b4538" opacity="0.85"/><ellipse cx="42" cy="40" rx="1.8" ry="2.1" fill="#57504a" opacity="0.85"/><ellipse cx="56" cy="52" rx="2.1" ry="1.6" fill="#57504a" opacity="0.85"/><ellipse cx="34" cy="38" rx="1.2" ry="1.1" fill="#4a4540" opacity="0.85"/><ellipse cx="44" cy="158" rx="1.0" ry="2.0" fill="#3b4538" opacity="0.85"/><ellipse cx="22" cy="124" rx="2.1" ry="1.3" fill="#464841" opacity="0.85"/><ellipse cx="41" cy="14" rx="2.2" ry="1.9" fill="#57504a" opacity="0.85"/><ellipse cx="9" cy="48" rx="1.2" ry="1.7" fill="#514b45" opacity="0.85"/><ellipse cx="57" cy="84" rx="1.9" ry="2.2" fill="#30392d" opacity="0.85"/><ellipse cx="52" cy="106" rx="1.7" ry="2.0" fill="#4a4640" opacity="0.85"/><ellipse cx="55" cy="43" rx="1.2" ry="1.1" fill="#3a3d35" opacity="0.85"/><ellipse cx="58" cy="160" rx="1.2" ry="1.9" fill="#464841" opacity="0.85"/><ellipse cx="81" cy="154" rx="2.3" ry="1.5" fill="#4a4640" opacity="0.85"/><ellipse cx="23" cy="121" rx="0.9" ry="1.4" fill="#3b4538" opacity="0.85"/><ellipse cx="31" cy="56" rx="1.9" ry="1.2" fill="#37332f" opacity="0.85"/><ellipse cx="13" cy="148" rx="1.0" ry="1.9" fill="#3b4538" opacity="0.85"/><ellipse cx="74" cy="28" rx="1.2" ry="1.8" fill="#57504a" opacity="0.85"/><ellipse cx="59" cy="111" rx="0.9" ry="0.9" fill="#2c3529" opacity="0.85"/><ellipse cx="55" cy="136" rx="2.1" ry="1.1" fill="#30392d" opacity="0.85"/><ellipse cx="33" cy="135" rx="2.5" ry="2.5" fill="#464841" opacity="0.85"/><ellipse cx="12" cy="155" rx="2.2" ry="1.6" fill="#464841" opacity="0.85"/><ellipse cx="33" cy="159" rx="1.1" ry="1.9" fill="#262824" opacity="0.85"/><ellipse cx="53" cy="137" rx="1.0" ry="1.4" fill="#2c3529" opacity="0.85"/><ellipse cx="9" cy="63" rx="1.5" ry="1.5" fill="#3a3d35" opacity="0.85"/><ellipse cx="60" cy="45" rx="2.8" ry="0.9" fill="#3a3d35" opacity="0.85"/><ellipse cx="63" cy="151" rx="1.4" ry="1.4" fill="#30392d" opacity="0.85"/><ellipse cx="41" cy="53" rx="1.8" ry="1.5" fill="#514b45" opacity="0.85"/><ellipse cx="37" cy="79" rx="2.7" ry="2.2" fill="#4a4540" opacity="0.85"/><ellipse cx="34" cy="106" rx="2.5" ry="2.1" fill="#2c3529" opacity="0.85"/><ellipse cx="47" cy="40" rx="1.4" ry="2.2" fill="#4a4540" opacity="0.85"/><ellipse cx="35" cy="129" rx="2.5" ry="1.4" fill="#4a4640" opacity="0.85"/><ellipse cx="28" cy="156" rx="1.5" ry="2.2" fill="#3b4538" opacity="0.85"/><ellipse cx="23" cy="136" rx="1.8" ry="2.4" fill="#4a4640" opacity="0.85"/><ellipse cx="7" cy="45" rx="1.1" ry="1.6" fill="#3a3d35" opacity="0.85"/><ellipse cx="54" cy="53" rx="1.5" ry="1.2" fill="#37332f" opacity="0.85"/><ellipse cx="21" cy="129" rx="1.2" ry="2.1" fill="#3b4538" opacity="0.85"/><ellipse cx="6" cy="61" rx="2.0" ry="2.4" fill="#37332f" opacity="0.85"/><ellipse cx="42" cy="81" rx="2.5" ry="1.0" fill="#57504a" opacity="0.85"/><ellipse cx="66" cy="66" rx="2.9" ry="1.6" fill="#3a3d35" opacity="0.85"/><ellipse cx="34" cy="37" rx="2.6" ry="0.8" fill="#4a4540" opacity="0.85"/><ellipse cx="53" cy="33" rx="2.1" ry="1.8" fill="#4a4540" opacity="0.85"/><ellipse cx="60" cy="94" rx="1.4" ry="1.0" fill="#464841" opacity="0.85"/><ellipse cx="48" cy="44" rx="2.3" ry="2.2" fill="#514b45" opacity="0.85"/><ellipse cx="20" cy="80" rx="1.7" ry="0.9" fill="#37332f" opacity="0.85"/><ellipse cx="81" cy="123" rx="0.9" ry="1.7" fill="#262824" opacity="0.85"/><ellipse cx="10" cy="160" rx="2.9" ry="1.5" fill="#30392d" opacity="0.85"/><ellipse cx="78" cy="77" rx="2.1" ry="1.3" fill="#514b45" opacity="0.85"/><ellipse cx="52" cy="8" rx="1.5" ry="1.1" fill="#3a3d35" opacity="0.85"/><ellipse cx="3" cy="158" rx="2.1" ry="2.2" fill="#3b4538" opacity="0.85"/><ellipse cx="42" cy="27" rx="2.0" ry="2.1" fill="#57504a" opacity="0.85"/><ellipse cx="80" cy="43" rx="2.2" ry="0.9" fill="#3a3d35" opacity="0.85"/><ellipse cx="43" cy="63" rx="2.5" ry="1.2" fill="#37332f" opacity="0.85"/><ellipse cx="40" cy="105" rx="1.3" ry="1.9" fill="#262824" opacity="0.85"/><ellipse cx="18" cy="26" rx="2.4" ry="1.9" fill="#37332f" opacity="0.85"/><ellipse cx="32" cy="96" rx="2.0" ry="1.6" fill="#2c3529" opacity="0.85"/><ellipse cx="21" cy="151" rx="1.2" ry="2.2" fill="#3b4538" opacity="0.85"/><ellipse cx="11" cy="151" rx="1.3" ry="2.4" fill="#30392d" opacity="0.85"/><ellipse cx="52" cy="33" rx="2.7" ry="1.3" fill="#4a4540" opacity="0.85"/><ellipse cx="71" cy="21" rx="1.4" ry="1.9" fill="#4a4540" opacity="0.85"/><ellipse cx="23" cy="59" rx="1.3" ry="2.2" fill="#4a4540" opacity="0.85"/><ellipse cx="15" cy="140" rx="2.7" ry="0.9" fill="#262824" opacity="0.85"/><ellipse cx="64" cy="41" rx="2.2" ry="1.8" fill="#4a4540" opacity="0.85"/><ellipse cx="33" cy="107" rx="1.5" ry="1.7" fill="#262824" opacity="0.85"/><ellipse cx="61" cy="8" rx="2.6" ry="1.1" fill="#514b45" opacity="0.85"/><ellipse cx="55" cy="75" rx="1.1" ry="2.4" fill="#57504a" opacity="0.85"/><ellipse cx="36" cy="113" rx="1.1" ry="2.3" fill="#3b4538" opacity="0.85"/><ellipse cx="42" cy="7" rx="1.1" ry="1.7" fill="#37332f" opacity="0.85"/><ellipse cx="41" cy="53" rx="2.9" ry="1.3" fill="#37332f" opacity="0.85"/><ellipse cx="1" cy="41" rx="2.6" ry="1.1" fill="#37332f" opacity="0.85"/><ellipse cx="27" cy="76" rx="1.6" ry="1.1" fill="#3a3d35" opacity="0.85"/><ellipse cx="58" cy="72" rx="2.6" ry="1.2" fill="#3a3d35" opacity="0.85"/><ellipse cx="53" cy="31" rx="2.6" ry="2.0" fill="#57504a" opacity="0.85"/><ellipse cx="40" cy="101" rx="1.2" ry="1.4" fill="#464841" opacity="0.85"/><ellipse cx="12" cy="74" rx="2.7" ry="1.7" fill="#57504a" opacity="0.85"/><ellipse cx="82" cy="78" rx="1.0" ry="1.4" fill="#4a4540" opacity="0.85"/><ellipse cx="47" cy="135" rx="0.9" ry="1.4" fill="#30392d" opacity="0.85"/><ellipse cx="25" cy="89" rx="2.1" ry="0.8" fill="#262824" opacity="0.85"/><ellipse cx="54" cy="0" rx="1.8" ry="2.2" fill="#4a4540" opacity="0.85"/><ellipse cx="68" cy="113" rx="1.0" ry="1.2" fill="#4a4640" opacity="0.85"/><ellipse cx="57" cy="153" rx="2.9" ry="2.0" fill="#2c3529" opacity="0.85"/><ellipse cx="13" cy="34" rx="0.8" ry="0.9" fill="#37332f" opacity="0.85"/><ellipse cx="73" cy="81" rx="0.9" ry="1.6" fill="#57504a" opacity="0.85"/><ellipse cx="35" cy="97" rx="2.5" ry="2.2" fill="#3b4538" opacity="0.85"/><ellipse cx="81" cy="93" rx="2.4" ry="1.0" fill="#4a4640" opacity="0.85"/><ellipse cx="16" cy="128" rx="2.5" ry="2.3" fill="#4a4640" opacity="0.85"/><ellipse cx="42" cy="49" rx="1.6" ry="1.5" fill="#37332f" opacity="0.85"/><ellipse cx="59" cy="43" rx="2.0" ry="1.5" fill="#57504a" opacity="0.85"/><ellipse cx="77" cy="7" rx="3.0" ry="1.0" fill="#2f2c29" opacity="0.85"/><ellipse cx="74" cy="105" rx="2.7" ry="1.3" fill="#464841" opacity="0.85"/><ellipse cx="59" cy="88" rx="2.4" ry="1.7" fill="#464841" opacity="0.85"/><ellipse cx="7" cy="142" rx="1.3" ry="1.2" fill="#262824" opacity="0.85"/><ellipse cx="35" cy="16" rx="0.8" ry="2.5" fill="#4a4540" opacity="0.85"/><ellipse cx="28" cy="159" rx="2.7" ry="2.0" fill="#2c3529" opacity="0.85"/><ellipse cx="54" cy="134" rx="1.1" ry="1.5" fill="#262824" opacity="0.85"/><ellipse cx="12" cy="10" rx="2.4" ry="1.0" fill="#2f2c29" opacity="0.85"/><ellipse cx="75" cy="99" rx="1.9" ry="1.2" fill="#464841" opacity="0.85"/><ellipse cx="46" cy="26" rx="2.9" ry="1.4" fill="#514b45" opacity="0.85"/><ellipse cx="36" cy="47" rx="2.2" ry="2.3" fill="#4a4540" opacity="0.85"/><ellipse cx="65" cy="35" rx="2.1" ry="1.6" fill="#2f2c29" opacity="0.85"/><ellipse cx="27" cy="80" rx="2.7" ry="1.1" fill="#514b45" opacity="0.85"/><ellipse cx="72" cy="25" rx="1.7" ry="1.9" fill="#57504a" opacity="0.85"/><ellipse cx="23" cy="91" rx="1.7" ry="1.5" fill="#3b4538" opacity="0.85"/><ellipse cx="36" cy="26" rx="2.5" ry="2.5" fill="#3a3d35" opacity="0.85"/><ellipse cx="19" cy="157" rx="1.8" ry="2.0" fill="#464841" opacity="0.85"/><ellipse cx="10" cy="93" rx="2.2" ry="1.3" fill="#262824" opacity="0.85"/><ellipse cx="16" cy="106" rx="0.9" ry="0.8" fill="#2c3529" opacity="0.85"/><ellipse cx="82" cy="56" rx="2.8" ry="2.1" fill="#514b45" opacity="0.85"/><ellipse cx="45" cy="55" rx="2.1" ry="2.4" fill="#57504a" opacity="0.85"/><ellipse cx="10" cy="35" rx="2.6" ry="0.8" fill="#57504a" opacity="0.85"/><ellipse cx="59" cy="104" rx="2.8" ry="2.5" fill="#464841" opacity="0.85"/><ellipse cx="11" cy="5" rx="1.9" ry="2.3" fill="#2f2c29" opacity="0.85"/><ellipse cx="66" cy="32" rx="1.4" ry="2.4" fill="#2f2c29" opacity="0.85"/><ellipse cx="11" cy="41" rx="2.9" ry="1.4" fill="#2f2c29" opacity="0.85"/><ellipse cx="60" cy="93" rx="1.9" ry="0.9" fill="#30392d" opacity="0.85"/><ellipse cx="46" cy="140" rx="2.1" ry="0.9" fill="#464841" opacity="0.85"/><ellipse cx="9" cy="27" rx="1.3" ry="1.7" fill="#37332f" opacity="0.85"/><ellipse cx="79" cy="97" rx="1.2" ry="1.4" fill="#464841" opacity="0.85"/><ellipse cx="48" cy="63" rx="2.0" ry="2.4" fill="#514b45" opacity="0.85"/><ellipse cx="1" cy="131" rx="1.4" ry="1.3" fill="#3b4538" opacity="0.85"/><ellipse cx="27" cy="89" rx="2.3" ry="2.2" fill="#3b4538" opacity="0.85"/><ellipse cx="44" cy="52" rx="2.4" ry="0.8" fill="#37332f" opacity="0.85"/><ellipse cx="2" cy="125" rx="1.7" ry="1.4" fill="#4a4640" opacity="0.85"/><ellipse cx="49" cy="49" rx="1.5" ry="2.4" fill="#4a4540" opacity="0.85"/><ellipse cx="37" cy="116" rx="1.3" ry="0.9" fill="#464841" opacity="0.85"/><ellipse cx="2" cy="21" rx="0.9" ry="2.0" fill="#514b45" opacity="0.85"/><ellipse cx="37" cy="97" rx="2.8" ry="1.5" fill="#262824" opacity="0.85"/><ellipse cx="34" cy="136" rx="2.8" ry="1.1" fill="#4a4640" opacity="0.85"/><ellipse cx="72" cy="102" rx="1.2" ry="2.4" fill="#30392d" opacity="0.85"/><ellipse cx="69" cy="102" rx="1.6" ry="1.2" fill="#464841" opacity="0.85"/><ellipse cx="7" cy="118" rx="1.3" ry="1.4" fill="#464841" opacity="0.85"/><ellipse cx="2" cy="141" rx="1.9" ry="1.5" fill="#262824" opacity="0.85"/><ellipse cx="65" cy="22" rx="1.0" ry="1.5" fill="#57504a" opacity="0.85"/><ellipse cx="81" cy="2" rx="3.0" ry="1.0" fill="#2f2c29" opacity="0.85"/><ellipse cx="80" cy="160" rx="1.0" ry="1.8" fill="#464841" opacity="0.85"/><ellipse cx="4" cy="74" rx="2.5" ry="2.1" fill="#4a4540" opacity="0.85"/><ellipse cx="9" cy="99" rx="2.8" ry="2.0" fill="#3b4538" opacity="0.85"/><ellipse cx="70" cy="50" rx="2.0" ry="1.2" fill="#3a3d35" opacity="0.85"/>
<path d="M48 2 L58 40 L80 90 M30 20 L40 60 L45 110 M10 60 L22 120" fill="none" stroke="#2a2826" stroke-width="0.9" opacity="0.6"/>
<path d="M0 146 L46 162 L46 166 L0 151 Z" fill="#524840"/>
</g></svg>
<div class="t" style="left:842.3px;top:395.14px;font-size:9.6px;line-height:9.6px;color:#353535;font-weight:normal;">pecific, answer</div>
<div class="abs" style="left:556.5px;top:506.5px;width:3.5px;height:3.5px;background:#2c2c2c;border-radius:50%"></div>
<div class="t" style="left:570.2px;top:504.14px;font-size:9.6px;line-height:9.6px;color:#2c2c2c;font-weight:normal;">When: When does the goal need to be accomplished?</div>
<div class="abs" style="left:556.5px;top:528.5px;width:3.5px;height:3.5px;background:#2c2c2c;border-radius:50%"></div>
<div class="t" style="left:570.2px;top:526.14px;font-size:9.6px;line-height:9.6px;color:#2c2c2c;font-weight:normal;">Why: Why do I want to achieve this goal?</div>
<div class="abs" style="left:381px;top:562px;width:573px;height:1px;background:#efefef"></div>
<div class="abs" style="left:887px;top:570px;width:60px;height:23px;background:#fbb12d;border-radius:5px"></div>
<div class="t" style="left:898.3px;top:577.13px;font-size:10.2px;line-height:10.2px;color:#fff;font-weight:bold;">NEXT</div>
<svg class="abs" style="left:932px;top:576px" width="7" height="11" viewBox="0 0 7 11"><path d="M1.5 1.5 L5.5 5.5 L1.5 9.5" fill="none" stroke="#fff" stroke-width="1.4"/></svg>
<svg class="abs" style="left:836px;top:576px" width="7" height="11" viewBox="0 0 7 11"><path d="M5.5 1.5 L1.5 5.5 L5.5 9.5" fill="none" stroke="#fcd998" stroke-width="1.3"/></svg>
<div class="t" style="left:850px;top:578.53px;font-size:8.2px;line-height:8.2px;color:#fcd998;font-weight:normal;">PREV</div>
<div class="abs" style="left:608px;top:188.6px;width:2px;height:1.2px;background:#2a2a2a"></div>
<div class="abs" style="left:613px;top:188.6px;width:4px;height:1.2px;background:#222"></div>
<div class="abs" style="left:618px;top:188.6px;width:2px;height:1.2px;background:#2a2a2a"></div>
<div class="abs" style="left:493.6px;top:190px;width:348.2px;height:310.2px;background:#fff;border-radius:4px"></div>
<div class="t" style="left:517px;top:223.13px;font-size:13.85px;line-height:13.85px;color:#1a1a1a;font-weight:bold;">Setting SMART goals</div>
<div class="t" style="left:517px;top:254.99px;font-size:10.36px;line-height:10.36px;color:#505050;font-weight:bold;">What is a SMART goal?</div>
<svg class="abs" style="left:518px;top:282px" width="301" height="134" viewBox="0 0 301 134">
<defs>
<linearGradient id="sky" x1="0" y1="0" x2="0" y2="1"><stop offset="0" stop-color="#e7e9e9"/><stop offset="0.35" stop-color="#eceeed"/><stop offset="0.6" stop-color="#eef0f0"/><stop offset="1" stop-color="#e4eaec"/></linearGradient>
<linearGradient id="gold" x1="0" y1="0" x2="0" y2="1"><stop offset="0" stop-color="#cfa96c"/><stop offset="0.5" stop-color="#d0a969"/><stop offset="1" stop-color="#c49a5a"/></linearGradient>
<linearGradient id="teal" x1="0" y1="0" x2="1" y2="1"><stop offset="0" stop-color="#2f6e7c"/><stop offset="0.55" stop-color="#4f8790"/><stop offset="1" stop-color="#9ab8bb"/></linearGradient>
<linearGradient id="grn" x1="0" y1="0" x2="0" y2="1"><stop offset="0" stop-color="#6f9a68"/><stop offset="0.5" stop-color="#55854d"/><stop offset="1" stop-color="#46733f"/></linearGradient>
<linearGradient id="haze" x1="0" y1="0" x2="0" y2="1"><stop offset="0" stop-color="#d6dfe2"/><stop offset="1" stop-color="#b9cad0"/></linearGradient>
<linearGradient id="ridge" x1="0" y1="0" x2="1" y2="0"><stop offset="0" stop-color="#8f765c"/><stop offset="1" stop-color="#7f6650"/></linearGradient>
<filter id="soft" x="0" y="0" width="1" height="1"><feGaussianBlur stdDeviation="0.5"/></filter>
</defs>
<g filter="url(#soft)">
<rect width="301" height="134" fill="url(#sky)"/>
<path d="M60 50 L100 50.8 L125 48 L160 49 L196 48.4 L228 49.8 L262.8 53.1 L301 58 L301 100 L60 100 Z" fill="#d5dee1"/>
<path d="M80 66 L110 58 L140 64.8 L175 60 L210 57 L250 60 L290 62 L301 64 L301 100 L80 100 Z" fill="url(#haze)"/>
<path d="M0 41.1 L6 39 L12.1 37.5 L20 39.5 L28.3 40 L34 38 L40.1 36.8 L47 39 L53 41.1 L66 46.5 L75 53 L83 60.5 L98 69 L115.6 76.7 L125 82 L0 100 Z" fill="url(#teal)"/>
<path d="M110 80 L126.4 77.8 L148 75.6 L165 80 L175 86 L175 134 L110 134 Z" fill="#7f9f84"/>
<path d="M0 55 L18.6 58.4 L40 64.8 L61.7 72.4 L72.5 75.6 L80 72.5 L87.6 71.3 L98 73.5 L117.8 81 L128 88 L128 134 L0 134 Z" fill="url(#grn)"/>
<path d="M0 80 L40 86 L80 90 L0 108 Z" fill="#3f6a3a" opacity="0.5"/>
<path d="M174.3 84.3 L200 76 L245.5 60.5 L270 53 L300.5 46.5 L301 64 L245 70 Z" fill="url(#ridge)"/>
<path d="M0 106.9 L40 101.5 L83 98.3 L126.4 92.9 L156.6 88.6 L174.3 85.3 L210 76 L245 69 L301 63.8 L301 134 L0 134 Z" fill="url(#gold)"/>
<path d="M271 77l-1.3 -3.1M38 103l-1.5 -4.5M296 125l2.3 -2.5M269 89l-1.7 -2.8M102 106l-0.1 -4.4M145 120l2.4 -1.7M226 125l1.4 -1.6M59 126l2.2 -4.8M240 126l2.2 -1.6M164 100l-1.6 -2.6M45 124l-1.7 -5.0M286 109l-2.0 -4.3M144 101l-1.8 -2.9M298 131l-0.0 -3.7M27 113l1.8 -4.2M3 122l0.9 -2.4M207 133l0.1 -4.8M66 123l-2.3 -3.7M68 101l-0.9 -2.0M178 95l-2.5 -4.7M84 112l1.7 -1.9M11 124l0.2 -1.8M0 111l0.6 -3.5M189 128l-0.3 -2.8M179 96l-0.0 -4.9M96 133l-1.1 -3.2M224 83l-1.0 -4.2M101 106l-0.2 -3.4M224 110l-1.2 -1.6M129 115l0.7 -4.0M274 94l1.8 -2.9M130 102l2.1 -4.2M144 113l-0.8 -3.2M300 113l1.7 -1.7M194 131l-1.8 -4.0M276 79l-0.4 -3.6M187 84l-0.6 -1.9M17 122l1.9 -4.1M152 130l0.6 -3.4M166 97l0.1 -4.1M197 85l-2.0 -3.8M179 95l-0.1 -4.6M240 76l-2.2 -4.0M200 124l0.6 -2.0M71 110l-0.8 -3.6M41 129l1.5 -3.8M119 95l-1.5 -1.6M268 101l-2.5 -4.2M268 110l-0.2 -3.0M46 110l-1.7 -2.5M71 115l2.1 -1.6M49 108l-1.3 -1.6M121 133l-0.9 -2.8M85 124l-1.7 -4.0M2 110l-0.4 -4.2M165 133l-0.7 -3.3M21 131l2.2 -3.2M73 100l-2.2 -2.9M54 118l0.2 -2.9M258 85l0.2 -1.6M93 113l-1.4 -4.4M94 98l1.6 -4.2M39 105l-2.1 -2.4M174 96l1.0 -1.7M60 110l-2.0 -2.8M115 97l-1.7 -1.7M286 108l-0.4 -2.3M29 120l1.0 -2.1M145 129l-1.4 -2.9M61 119l1.3 -2.7M186 103l1.7 -2.0M188 124l-2.4 -2.8M177 93l-0.9 -2.9M94 110l1.0 -3.2M157 100l-2.1 -1.8M184 93l2.0 -3.3M293 103l-2.5 -2.9M113 129l-1.0 -2.2M91 106l2.3 -3.6M9 110l0.5 -3.5M18 119l2.3 -4.4M253 102l-1.5 -1.9M288 109l-2.0 -4.9M224 81l0.2 -2.9M35 122l0.9 -2.8M163 104l-2.0 -4.8M244 74l-0.7 -4.2M76 114l0.1 -2.8M66 133l-0.1 -3.0M84 132l0.0 -3.9M124 129l2.1 -4.4M127 133l-1.4 -5.0M82 114l0.8 -2.5M211 83l0.7 -1.9M111 112l2.3 -3.5M171 97l1.2 -3.4M145 120l1.4 -1.5M152 116l-2.2 -4.3M12 117l-2.4 -2.7M135 118l-0.6 -4.7M215 130l2.4 -4.8M62 115l-2.1 -1.7M223 92l0.6 -4.4M189 94l1.9 -2.4M169 85l1.6 -1.7M184 114l2.2 -2.3M19 125l-2.2 -1.8M254 80l-1.2 -4.1M0 128l2.0 -3.3M47 109l2.2 -2.4M135 115l-1.8 -4.7M126 125l-1.0 -4.4M193 132l1.3 -1.9M31 123l0.4 -4.5M293 92l1.1 -3.7M124 128l-1.0 -1.7M284 120l0.0 -4.6M125 100l0.3 -1.6M32 119l2.2 -4.8M31 127l0.2 -1.9M159 92l2.2 -1.7M133 130l0.0 -3.5M40 109l1.1 -3.9M300 75l-2.1 -2.1M187 127l1.0 -2.1M147 128l-1.1 -4.7M39 123l1.1 -4.1M284 88l0.8 -4.5M252 114l1.2 -2.7M214 112l-1.7 -4.3M0 129l1.7 -4.2M257 87l0.8 -4.4M175 121l-0.3 -3.3M221 98l1.3 -3.6M207 82l1.7 -2.4M17 106l-2.0 -4.2M132 125l0.1 -3.2M298 79l-0.8 -1.7M111 96l-2.5 -2.3M269 114l-0.5 -2.3M215 103l-0.9 -2.2M110 97l-0.7 -3.6M87 96l-0.4 -2.0M2 122l1.7 -4.9M278 74l-2.5 -2.0M181 121l1.5 -3.2M277 108l-1.6 -3.4M234 93l-1.9 -3.9M25 124l0.7 -4.7M154 109l-1.7 -3.1M135 92l-1.3 -3.9M27 113l-1.0 -4.8M104 132l-0.8 -1.8M205 104l1.8 -1.8M207 104l-2.2 -4.6M86 106l0.0 -4.4M185 103l-1.8 -3.0M53 116l-2.3 -4.1M86 121l-0.2 -1.6M186 126l-0.1 -2.1M39 126l-0.2 -4.0M52 115l-0.5 -4.8M186 105l-0.2 -3.6M11 129l-1.3 -3.8M175 109l1.4 -4.7M102 118l2.2 -2.1M150 100l-2.3 -3.3M298 120l-0.2 -2.3M37 109l-0.9 -4.9M252 121l-1.7 -2.4M20 111l-0.0 -4.0M274 105l0.4 -2.8M11 114l-1.9 -3.1M224 110l-0.5 -2.6M191 126l-1.0 -4.3M3 123l-2.5 -2.3M69 106l0.4 -3.8M208 83l-0.2 -2.2M29 126l-0.1 -2.7M40 117l-1.5 -3.5M280 70l-1.0 -3.2M81 103l2.0 -2.9M106 122l-2.4 -3.7M85 130l-1.2 -3.0M146 94l1.1 -3.8M162 123l0.6 -4.8M152 118l0.9 -2.7M18 127l-0.0 -2.3M217 121l2.2 -3.1M288 121l-2.2 -4.4M15 133l-0.0 -2.6M73 122l2.0 -3.5M99 105l-2.5 -2.8M45 112l2.2 -4.2M75 108l-0.1 -3.7M158 99l1.4 -2.0M132 124l1.9 -3.4M285 71l-0.4 -4.6M45 134l-1.0 -3.4M143 102l-1.3 -4.2M31 111l0.6 -5.0M203 116l-0.7 -3.3M102 103l-0.0 -2.6M179 94l-2.2 -2.3M55 115l2.0 -4.6M236 83l1.8 -4.8M252 130l-2.1 -4.0M197 129l-2.3 -3.9M104 100l0.1 -2.3M281 70l-2.0 -4.6M129 99l-1.9 -2.3M287 131l-0.4 -2.7M14 119l0.7 -2.3M90 107l0.0 -3.6M87 130l1.0 -3.6M251 90l1.2 -3.7M80 109l0.8 -4.9M169 117l-2.1 -2.4M297 100l-0.1 -3.0" stroke="#9a7240" stroke-width="0.9" opacity="0.55" fill="none"/>
<path d="M187 120l2.2 -4.3M278 71l2.2 -3.1M173 84l-1.1 -2.3M230 85l-1.8 -4.3M204 90l1.0 -4.8M20 114l-2.5 -3.6M174 84l-1.6 -1.7M107 115l-2.0 -4.2M103 118l-0.8 -4.7M297 102l-1.3 -2.9M249 101l-2.2 -3.0M10 120l-1.8 -4.4M45 129l-0.2 -2.5M257 133l-0.1 -3.1M237 121l0.8 -3.9M109 122l-0.1 -2.5M208 95l0.7 -4.8M246 113l-0.8 -4.3M222 124l1.7 -2.7M50 129l-0.1 -4.8M217 119l1.4 -2.1M200 103l1.4 -3.7M217 79l-0.3 -2.1M58 101l-0.6 -3.1M175 132l-0.4 -4.4M193 100l0.5 -2.0M288 132l-0.7 -3.6M88 133l2.3 -2.8M37 122l-1.0 -3.1M249 74l-1.1 -3.4M235 89l-1.7 -2.4M88 119l0.7 -3.2M276 127l-2.4 -3.4M89 127l1.7 -1.7M176 124l-1.3 -1.7M238 114l1.1 -1.6M130 104l-0.1 -3.6M113 95l-1.7 -3.9M71 112l-1.6 -4.1M287 113l-1.9 -2.3M256 104l0.4 -3.6M47 107l-0.6 -2.8M282 113l-0.1 -3.9M35 124l0.9 -2.5M202 131l-0.3 -3.8M123 104l-2.3 -1.7M94 99l2.1 -3.4M172 103l1.1 -3.7M94 124l2.0 -3.4M229 109l1.6 -3.0M287 116l-1.2 -4.0M203 95l1.3 -1.7M8 109l-0.7 -2.0M99 95l1.6 -3.5M282 120l-0.9 -1.9M139 108l1.3 -3.0M160 133l-2.0 -3.6M126 93l-2.3 -4.9M106 103l1.7 -4.9M11 111l1.1 -1.8M60 127l0.9 -2.6M296 121l1.0 -4.7M162 124l0.5 -2.8M175 122l-1.0 -4.0M83 123l1.3 -1.8M288 127l1.7 -3.9M54 122l2.1 -4.6M116 96l0.3 -3.9M187 129l0.7 -2.1M68 101l1.7 -3.5M219 101l0.1 -3.0M57 120l1.0 -3.8M256 112l-1.4 -4.7M28 109l-2.0 -3.7M222 123l1.1 -4.3M19 111l-0.2 -2.8M290 130l1.3 -1.8M89 100l-0.7 -3.2M276 94l-0.0 -2.5M237 109l-0.8 -2.5M156 88l-1.3 -3.0M22 113l-0.1 -1.8M118 125l0.5 -3.0M194 115l-2.4 -1.6M301 117l-1.8 -4.6M51 116l-0.6 -1.8M266 83l1.6 -1.6M180 90l2.1 -2.3M9 112l-1.2 -3.0M112 125l0.1 -2.0M50 132l-0.3 -1.8M159 104l-1.0 -4.7M250 81l-0.0 -2.7M43 133l-1.1 -2.4M270 81l-2.2 -2.0M262 73l-1.9 -3.6M195 128l-2.2 -4.0M27 115l-0.4 -1.8M196 90l-0.0 -2.0M149 112l0.3 -4.7M78 110l-1.2 -4.6M123 105l-2.2 -1.8M297 103l-1.1 -3.0M293 95l0.1 -2.2M115 119l-0.9 -4.7M224 91l1.3 -3.1M175 96l-2.2 -2.7M37 127l0.5 -2.7M264 79l-0.4 -3.0M161 109l-1.5 -1.9M194 93l-2.4 -2.5M239 120l1.7 -3.7M216 126l-2.4 -3.7M90 124l-1.7 -2.9M123 92l1.3 -3.1M259 114l1.9 -4.2M239 99l0.8 -3.8M205 121l0.2 -2.2M133 126l-1.0 -2.3M21 121l0.8 -2.3M28 126l-0.9 -2.9M153 127l-0.2 -3.5M265 90l0.5 -2.8M227 128l-2.1 -1.7M100 122l1.8 -3.3M188 87l-0.6 -4.6M284 130l1.8 -2.9M20 109l1.2 -5.0M92 128l1.1 -4.5M74 111l-0.1 -4.8M220 89l-1.9 -4.7M212 119l1.9 -3.2M252 91l0.5 -3.5M94 106l0.5 -3.1M186 114l2.1 -3.8M214 117l0.6 -2.3M171 134l1.1 -2.6M25 127l0.2 -3.8M259 81l0.6 -3.2M275 130l-0.8 -4.1M160 118l1.8 -3.7M292 100l0.8 -3.2M57 132l-1.0 -2.5M78 134l1.2 -4.0M2 116l2.0 -3.1M128 113l-0.9 -3.1M9 110l-2.4 -2.9M257 102l-2.1 -1.7M174 98l-2.3 -4.0M282 112l-0.4 -1.7M267 89l-0.9 -4.9M80 112l0.5 -4.8M223 120l-0.1 -3.7M235 104l1.9 -2.1M205 105l-0.3 -4.8M280 109l1.4 -3.6M58 114l-2.4 -2.0M99 104l-2.4 -1.6M108 111l2.0 -3.9M66 134l0.4 -2.1M175 114l0.6 -4.9" stroke="#e6cd9c" stroke-width="0.9" opacity="0.6" fill="none"/>
<ellipse cx="284" cy="110" rx="18" ry="9" fill="#8a6838" opacity="0.3"/>


<path d="M136 60.5 L148 65 M164.6 58.4 L155 65" stroke="#c98a7a" stroke-width="1.3"/>
<rect x="147.6" y="64.5" width="8.2" height="12.5" rx="1.5" fill="#c47a70"/>
<circle cx="151" cy="61.2" r="2.2" fill="#6a4a3a"/>
<path d="M149.5 76.5 L149 88.6 M154.5 76.5 L155 88" stroke="#1c1c1c" stroke-width="2.3"/>
</g>
</svg>
<div class="t" style="left:516.5px;top:427.48px;font-size:9.55px;line-height:9.55px;color:#3c3c3c;font-weight:normal;">SMART stands for Specific, Measurable, Achievable, Realistic, and</div>
<div class="t" style="left:516.5px;top:443.03px;font-size:9.55px;line-height:9.55px;color:#3c3c3c;font-weight:normal;">Timely. Using the SMART criteria will help you increase the chances of</div>
<div class="t" style="left:516.5px;top:458.58px;font-size:9.55px;line-height:9.55px;color:#3c3c3c;font-weight:normal;">reaching your goals as it provides a clear structure and steps to</div>
<div class="t" style="left:516.5px;top:474.13px;font-size:9.55px;line-height:9.55px;color:#3c3c3c;font-weight:normal;">accomplish them.</div>
<svg class="abs" style="left:0;top:0" width="1011" height="649" viewBox="0 0 1011 649">
  <!-- Apply & Close -->
  <g fill="none" stroke-linejoin="miter">
    <path d="M37.5 25.5 V20.5 H58.5 V36.5 H53" stroke="#6b6b6b" stroke-width="1.1"/>
    <path d="M31.5 27.5 H34.5 V34.5 H47.5 V33.5 H51.5 V46.5 H35 L31.5 43 Z" fill="#e2d3ec" stroke="#9b5fb8" stroke-width="1.2"/>
    <path d="M34.5 27.5 H39.5" stroke="#9b5fb8" stroke-width="1.2"/>
    <rect x="37.5" y="41.5" width="10" height="5" fill="#fff" stroke="#9b5fb8" stroke-width="1.2"/>
    <rect x="39.5" y="44" width="1.6" height="2" fill="#9b5fb8"/>
    <path d="M40.5 32.5 C41 28 45 27.2 53.5 27.3" stroke="#3b8ed8" stroke-width="1.3"/>
    <path d="M48.5 23 L53.5 27.4 L48.5 31.8" stroke="#3b8ed8" stroke-width="1.3"/>
  </g>
  <!-- Properties -->
  <g>
        <rect x="93.5" y="21.5" width="26" height="21" fill="#fff" stroke="#4a4a4a" stroke-width="1.1"/>
    <rect x="97.5" y="25" width="18.5" height="5.8" fill="#d4d4d4" stroke="#707070" stroke-width="1"/>
    <path d="M97.3 33.3 H99.3 M100.8 33.3 H107.7 M97.3 36.3 H99.3 M100.8 36.3 H106" stroke="#555" stroke-width="1"/>
    <g transform="translate(115 41) scale(0.92)">
      <circle r="8.2" fill="#b2e1e6"/>
      <path d="M-1.8 -7.6 L1.8 -7.6 L2.6 -5.2 L5 -6.2 L7.2 -3.6 L5.6 -1.6 L5.6 1.6 L7.2 3.6 L5 6.2 L2.6 5.2 L1.8 7.6 L-1.8 7.6 L-2.6 5.2 L-5 6.2 L-7.2 3.6 L-5.6 1.6 L-5.6 -1.6 L-7.2 -3.6 L-5 -6.2 L-2.6 -5.2 Z" fill="#8dbbea" stroke="#3f86cf" stroke-width="1.1" stroke-linejoin="round"/>
      <circle r="2.4" fill="#b2e1e6" stroke="#3f86cf" stroke-width="1"/>
    </g>
  </g>
  <!-- Size -->
  <g>
    <rect x="141.5" y="23.5" width="26" height="20" fill="#fff" stroke="#4a4a4a" stroke-width="1.1"/>
    <rect x="145.5" y="28.5" width="18" height="5" fill="#d4d4d4" stroke="#707070" stroke-width="1"/>
    <path d="M145.3 36.3 H147.3 M149 36.3 H161 M145.3 39.3 H147.3 M149 39.3 H163" stroke="#555" stroke-width="1"/>
    <path d="M141.5 19.5 H167.5 M141.5 17.5 V21.5 M167.5 17.5 V21.5" stroke="#3f86cf" stroke-width="1.1"/>
    <path d="M171.5 23.5 V43.5 M169.5 23.5 H173.5 M169.5 43.5 H173.5" stroke="#3f86cf" stroke-width="1.1"/>
  </g>
  <!-- Color scheme -->
  <g>
    <rect x="186.5" y="19.5" width="13" height="13" fill="#8cb9e6"/>
    <rect x="199.5" y="19.5" width="13" height="13" fill="#fff"/>
    <rect x="186.5" y="32.5" width="13" height="13" fill="#ffdc94"/>
    <rect x="199.5" y="32.5" width="13" height="13" fill="#f0939a"/>
    <path d="M199.5 19.5 V32.5" stroke="#3f86cf" stroke-width="1"/>
    <path d="M199.5 32.5 H212.5" stroke="#d0453a" stroke-width="1"/>
    <path d="M186.5 32.5 H199.5 V45.5" fill="none" stroke="#e8a030" stroke-width="1"/>
    <rect x="186.5" y="19.5" width="26" height="26" fill="none" stroke="#333" stroke-width="1.1"/>
  </g>
  <!-- Text -->
  <g>
    <rect x="228.5" y="20.5" width="26" height="26" fill="#fff" stroke="#333" stroke-width="1.1"/>
    <text x="231" y="38.7" font-family="Liberation Serif" font-size="12.5" fill="#4a4a4a" stroke="#4a4a4a" stroke-width="0.25">A</text>
    <text x="240.3" y="38.7" font-family="Liberation Serif" font-size="17" font-weight="bold" fill="#3f86cf">B</text>
  </g>
</svg>
</body></html>
